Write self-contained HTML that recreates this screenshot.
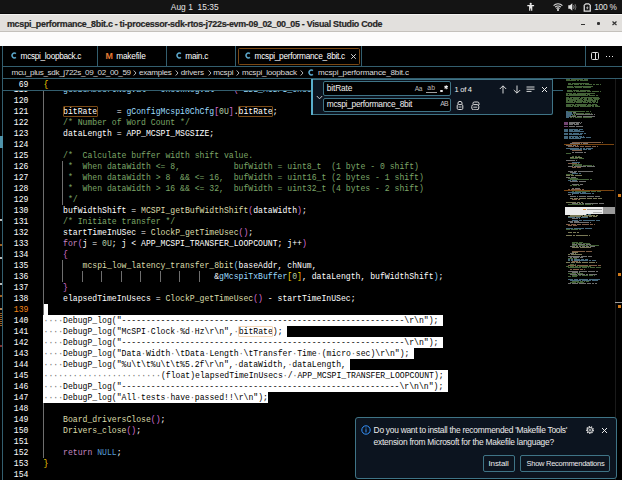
<!DOCTYPE html><html><head><meta charset="utf-8"><style>
*{margin:0;padding:0;box-sizing:border-box}
html,body{width:622px;height:480px;overflow:hidden;background:#000}
body{position:relative;font-family:"Liberation Sans",sans-serif}
.a{position:absolute}
.t{position:absolute;white-space:pre;line-height:1}
.s{-webkit-text-stroke:0.2px currentColor}
.code{position:absolute;left:0;width:622px;height:11px;font-family:"Liberation Mono",monospace;font-size:8.130px;line-height:11px;white-space:pre}
.ln{position:absolute;top:0;width:30px;text-align:right;color:#fff}
.ct{position:absolute;left:43.50px;top:0}
.hl{position:absolute;top:0;height:11px;border:1px solid #7a4a16;border-radius:1px}
.sel{position:absolute;background:#fff}
.bd{background:#335e6e}
</style></head><body>
<div class="a" style="left:0;top:0;width:622px;height:14px;background:#141414"></div>
<div class="t" style="left:170.80px;top:3.20px;font-size:8.40px;font-weight:normal;color:#e6e6e6;letter-spacing:0.025px">Aug 1  15:35</div>
<svg class="a" style="left:526px;top:2px" width="10" height="10" viewBox="0 0 10 10"><circle cx="4.7" cy="1.9" r="1.1" fill="#e8e8e8"/><path d="M1.3 3.6 H8.1 M4.7 3.6 V6.5 M3.7 4 V8.8 M5.7 4 V8.8" stroke="#e8e8e8" stroke-width="1.2" fill="none"/></svg>
<svg class="a" style="left:552.5px;top:2.8px" width="10" height="8" viewBox="0 0 10 8"><path d="M0.6 2.6 A6.2 6.2 0 0 1 9.4 2.6" stroke="#e0e0e0" stroke-width="1.1" fill="none"/><path d="M2.1 4.2 A4 4 0 0 1 7.9 4.2" stroke="#e0e0e0" stroke-width="1.1" fill="none"/><path d="M3.5 5.6 A2 2 0 0 1 6.5 5.6" stroke="#e0e0e0" stroke-width="1.1" fill="none"/><circle cx="5" cy="6.9" r="1" fill="#eee"/></svg>
<svg class="a" style="left:567.5px;top:3px" width="10" height="8" viewBox="0 0 10 8"><path d="M0.3 2.3 H2 L4.3 0.3 V7.7 L2 5.7 H0.3Z" fill="#e8e8e8"/><path d="M5.6 2.2 Q6.6 4 5.6 5.8" stroke="#aaa" stroke-width="0.9" fill="none"/><path d="M7 1 Q8.9 4 7 7" stroke="#777" stroke-width="0.9" fill="none"/></svg>
<svg class="a" style="left:583px;top:2.5px" width="8.5" height="9" viewBox="0 0 8.5 9"><path d="M2.6 0.3 H5.9 L7.9 2 V8.7 H0.6 V2Z" fill="#e0e0e0"/><path d="M2.9 1.6 H5.6 L6.6 2.6 V7.4 H1.9 V2.6Z" fill="#141414"/><path d="M4.8 2.8 L3 5.3 H4.3 L3.7 7 L5.6 4.6 H4.3Z" fill="#e8e8e8"/></svg>
<div class="t" style="left:594.20px;top:3.10px;font-size:8.30px;font-weight:normal;color:#e6e6e6;letter-spacing:-0.186px">100 %</div>
<div class="a" style="left:0;top:14px;width:622px;height:1px;background:#f4f3f1"></div>
<div class="a" style="left:0;top:15px;width:622px;height:16px;background:#e2e0dd"></div>
<div class="a" style="left:0;top:30.5px;width:622px;height:1px;background:#c4c1bc"></div>
<div class="t s" style="left:7.00px;top:19.90px;font-size:8.90px;font-weight:bold;color:#262626;letter-spacing:-0.287px">mcspi_performance_8bit.c - ti-processor-sdk-rtos-j722s-evm-09_02_00_05 - Visual Studio Code</div>
<div class="a" style="left:581px;top:23.6px;width:4px;height:1.4px;background:#333"></div>
<div class="a" style="left:597px;top:21.5px;width:3px;height:3.2px;border-radius:1px;background:#333"></div>
<svg class="a" style="left:612px;top:21px" width="5" height="4.5" viewBox="0 0 5 4.5"><path d="M0.5 0.5 L4.5 4 M4.5 0.5 L0.5 4" stroke="#333" stroke-width="1.2"/></svg>
<div class="a" style="left:0;top:31.5px;width:622px;height:14.5px;background:#fcfcfc"></div>
<div class="a" style="left:0;top:13px;width:622px;height:1px;background:#080808"></div>
<div class="a" style="left:0;top:46px;width:622px;height:434px;background:#000"></div>
<div class="a bd" style="left:2px;top:46px;width:1px;height:434px"></div>
<div class="a bd" style="left:2px;top:66px;width:620px;height:1px"></div>
<div class="a bd" style="left:2px;top:78px;width:620px;height:1px"></div>
<div class="a bd" style="left:97px;top:46px;width:1px;height:20px"></div>
<div class="a bd" style="left:166px;top:46px;width:1px;height:20px"></div>
<div class="a bd" style="left:235px;top:46px;width:1px;height:20px"></div>
<div class="a bd" style="left:585px;top:46px;width:1px;height:20px"></div>
<div class="a bd" style="left:361px;top:46px;width:1px;height:20px"></div>
<div class="a" style="left:238px;top:48px;width:122px;height:17px;border:1px solid #7a4814;border-radius:1.5px"></div>
<svg class="a" style="left:9.90px;top:51.35px" width="8" height="9" viewBox="0 0 8 9"><path d="M5.9 2.6 A2.3 2.5 0 1 0 5.9 6.4" stroke="#5aa5c8" stroke-width="1.5" fill="none"/></svg>
<div class="t" style="left:20.60px;top:52.30px;font-size:8.30px;font-weight:normal;color:#ffffff;letter-spacing:-0.335px">mcspi_loopback.c</div>
<div class="t" style="left:105.6px;top:51.6px;font-size:8.9px;font-weight:bold;color:#e37933">M</div>
<div class="t" style="left:116.20px;top:52.30px;font-size:8.30px;font-weight:normal;color:#ffffff;letter-spacing:-0.188px">makefile</div>
<svg class="a" style="left:174.90px;top:51.35px" width="8" height="9" viewBox="0 0 8 9"><path d="M5.9 2.6 A2.3 2.5 0 1 0 5.9 6.4" stroke="#5aa5c8" stroke-width="1.5" fill="none"/></svg>
<div class="t" style="left:185.30px;top:52.30px;font-size:8.30px;font-weight:normal;color:#ffffff;letter-spacing:-0.273px">main.c</div>
<svg class="a" style="left:244.10px;top:51.35px" width="8" height="9" viewBox="0 0 8 9"><path d="M5.9 2.6 A2.3 2.5 0 1 0 5.9 6.4" stroke="#5aa5c8" stroke-width="1.5" fill="none"/></svg>
<div class="t" style="left:254.60px;top:52.30px;font-size:8.30px;font-weight:normal;color:#ffffff;letter-spacing:-0.292px">mcspi_performance_8bit.c</div>
<svg class="a" style="left:350px;top:53px" width="7" height="7" viewBox="0 0 7 7"><path d="M1.2 1.2 L5.8 5.8 M5.8 1.2 L1.2 5.8" stroke="#e8e8e8" stroke-width="0.9"/></svg>
<div class="a" style="left:590.7px;top:52px;width:8.5px;height:8px;border:1px solid #ddd;border-radius:1.5px"></div>
<div class="a" style="left:594.5px;top:52.5px;width:1px;height:7px;background:#ddd"></div>
<div class="a" style="left:606px;top:55.6px;width:1.3px;height:1.3px;background:#eee"></div>
<div class="a" style="left:609px;top:55.6px;width:1.3px;height:1.3px;background:#eee"></div>
<div class="a" style="left:612px;top:55.6px;width:1.3px;height:1.3px;background:#eee"></div>
<div class="t" style="left:11.60px;top:69.00px;font-size:8.10px;font-weight:normal;color:#dcdcdc;letter-spacing:-0.350px">mcu_plus_sdk_j722s_09_02_00_59</div>
<svg class="a" style="left:133.4px;top:70px" width="4" height="7" viewBox="0 0 4 7"><path d="M0.7 0.5 L3 3 L0.7 5.5" stroke="#e0e0e0" stroke-width="0.8" fill="none"/></svg>
<div class="t" style="left:138.90px;top:69.00px;font-size:8.10px;font-weight:normal;color:#dcdcdc;letter-spacing:-0.255px">examples</div>
<svg class="a" style="left:174.6px;top:70px" width="4" height="7" viewBox="0 0 4 7"><path d="M0.7 0.5 L3 3 L0.7 5.5" stroke="#e0e0e0" stroke-width="0.8" fill="none"/></svg>
<div class="t" style="left:180.70px;top:69.00px;font-size:8.10px;font-weight:normal;color:#dcdcdc;letter-spacing:-0.157px">drivers</div>
<svg class="a" style="left:207.6px;top:70px" width="4" height="7" viewBox="0 0 4 7"><path d="M0.7 0.5 L3 3 L0.7 5.5" stroke="#e0e0e0" stroke-width="0.8" fill="none"/></svg>
<div class="t" style="left:213.30px;top:69.00px;font-size:8.10px;font-weight:normal;color:#dcdcdc;letter-spacing:-0.248px">mcspi</div>
<svg class="a" style="left:236.4px;top:70px" width="4" height="7" viewBox="0 0 4 7"><path d="M0.7 0.5 L3 3 L0.7 5.5" stroke="#e0e0e0" stroke-width="0.8" fill="none"/></svg>
<div class="t" style="left:242.00px;top:69.00px;font-size:8.10px;font-weight:normal;color:#dcdcdc;letter-spacing:-0.232px">mcspi_loopback</div>
<svg class="a" style="left:300.3px;top:70px" width="4" height="7" viewBox="0 0 4 7"><path d="M0.7 0.5 L3 3 L0.7 5.5" stroke="#e0e0e0" stroke-width="0.8" fill="none"/></svg>
<svg class="a" style="left:307.10px;top:68.05px" width="8" height="9" viewBox="0 0 8 9"><path d="M5.9 2.6 A2.3 2.5 0 1 0 5.9 6.4" stroke="#5aa5c8" stroke-width="1.5" fill="none"/></svg>
<div class="t" style="left:318.00px;top:69.00px;font-size:8.10px;font-weight:normal;color:#dcdcdc;letter-spacing:-0.172px">mcspi_performance_8bit.c</div>
<div class="a" style="left:0;top:79px;width:563px;height:401px;overflow:hidden">
<div class="a" style="left:43px;top:5px;width:1px;height:374px;background:#6e6e6e"></div>
<div class="code" style="top:5px">
<div class="ct"><span style="color:#9cdcfe">    gesbeAssertNegVal</span><span style="color:#ffffff"> = </span><span style="color:#9cdcfe">checkNegVal</span><span style="color:#ffffff">  = </span><span style="color:#da70d6">(</span><span style="color:#9cdcfe"> ESL_MCSPI_checkValueRange</span><span style="color:#87cefa">(</span><span style="color:#ffffff">x</span></div>
<div class="ln" style="left:0;width:28.4px;color:#ffffff">119</div>
</div>
<div class="code" style="top:16px">
<div class="ln" style="left:0;width:28.4px;color:#ffffff">120</div>
</div>
<div class="code" style="top:27px">
<div class="ct"><span style="color:#ffffff">    bitRate</span><span style="color:#ffffff">    = </span><span style="color:#9cdcfe">gConfigMcspi0ChCfg</span><span style="color:#da70d6">[</span><span style="color:#b5cea8">0U</span><span style="color:#da70d6">]</span><span style="color:#ffffff">.bitRate;</span></div>
<div class="ln" style="left:0;width:28.4px;color:#ffffff">121</div>
</div>
<div class="code" style="top:38px">
<div class="ct"><span style="color:#7ca668">    /* Number of Word Count */</span></div>
<div class="ln" style="left:0;width:28.4px;color:#ffffff">122</div>
</div>
<div class="code" style="top:49px">
<div class="ct"><span style="color:#ffffff">    dataLength = APP_MCSPI_MSGSIZE;</span></div>
<div class="ln" style="left:0;width:28.4px;color:#ffffff">123</div>
</div>
<div class="code" style="top:60px">
<div class="ln" style="left:0;width:28.4px;color:#ffffff">124</div>
</div>
<div class="code" style="top:71px">
<div class="ct"><span style="color:#7ca668">    /*  Calculate buffer width shift value.</span></div>
<div class="ln" style="left:0;width:28.4px;color:#ffffff">125</div>
</div>
<div class="code" style="top:82px">
<div class="ct"><span style="color:#7ca668">     *  When dataWidth &lt;= 8,           bufWidth = uint8_t  (1 byte - 0 shift)</span></div>
<div class="ln" style="left:0;width:28.4px;color:#ffffff">126</div>
</div>
<div class="code" style="top:93px">
<div class="ct"><span style="color:#7ca668">     *  When dataWidth &gt; 8  &amp;&amp; &lt;= 16,  bufWidth = uint16_t (2 bytes - 1 shift)</span></div>
<div class="ln" style="left:0;width:28.4px;color:#ffffff">127</div>
</div>
<div class="code" style="top:104px">
<div class="ct"><span style="color:#7ca668">     *  When dataWidth &gt; 16 &amp;&amp; &lt;= 32,  bufWidth = uint32_t (4 bytes - 2 shift)</span></div>
<div class="ln" style="left:0;width:28.4px;color:#ffffff">128</div>
</div>
<div class="code" style="top:115px">
<div class="ct"><span style="color:#7ca668">     */</span></div>
<div class="ln" style="left:0;width:28.4px;color:#ffffff">129</div>
</div>
<div class="code" style="top:126px">
<div class="ct"><span style="color:#ffffff">    bufWidthShift = </span><span style="color:#dcdcaa">MCSPI_getBufWidthShift</span><span style="color:#da70d6">(</span><span style="color:#ffffff">dataWidth</span><span style="color:#da70d6">)</span><span style="color:#ffffff">;</span></div>
<div class="ln" style="left:0;width:28.4px;color:#ffffff">130</div>
</div>
<div class="code" style="top:137px">
<div class="ct"><span style="color:#7ca668">    /* Initiate transfer */</span></div>
<div class="ln" style="left:0;width:28.4px;color:#ffffff">131</div>
</div>
<div class="code" style="top:148px">
<div class="ct"><span style="color:#ffffff">    startTimeInUSec = </span><span style="color:#dcdcaa">ClockP_getTimeUsec</span><span style="color:#da70d6">()</span><span style="color:#ffffff">;</span></div>
<div class="ln" style="left:0;width:28.4px;color:#ffffff">132</div>
</div>
<div class="code" style="top:159px">
<div class="ct"><span style="color:#ffffff">    </span><span style="color:#c586c0">for</span><span style="color:#da70d6">(</span><span style="color:#ffffff">j = </span><span style="color:#b5cea8">0U</span><span style="color:#ffffff">; j &lt; APP_MCSPI_TRANSFER_LOOPCOUNT; j++</span><span style="color:#da70d6">)</span></div>
<div class="ln" style="left:0;width:28.4px;color:#ffffff">133</div>
</div>
<div class="code" style="top:170px">
<div class="ct"><span style="color:#ffffff">    </span><span style="color:#da70d6">{</span></div>
<div class="ln" style="left:0;width:28.4px;color:#ffffff">134</div>
</div>
<div class="code" style="top:181px">
<div class="ct"><span style="color:#ffffff">        </span><span style="color:#dcdcaa">mcspi_low_latency_transfer_8bit</span><span style="color:#87cefa">(</span><span style="color:#ffffff">baseAddr, chNum,</span></div>
<div class="ln" style="left:0;width:28.4px;color:#ffffff">135</div>
</div>
<div class="code" style="top:192px">
<div class="ct"><span style="color:#ffffff">                                   &amp;</span><span style="color:#9cdcfe">gMcspiTxBuffer</span><span style="color:#ffd700">[</span><span style="color:#b5cea8">0</span><span style="color:#ffd700">]</span><span style="color:#ffffff">, dataLength, bufWidthShift</span><span style="color:#87cefa">)</span><span style="color:#ffffff">;</span></div>
<div class="ln" style="left:0;width:28.4px;color:#ffffff">136</div>
</div>
<div class="code" style="top:203px">
<div class="ct"><span style="color:#ffffff">    </span><span style="color:#da70d6">}</span></div>
<div class="ln" style="left:0;width:28.4px;color:#ffffff">137</div>
</div>
<div class="code" style="top:214px">
<div class="ct"><span style="color:#ffffff">    elapsedTimeInUsecs = </span><span style="color:#dcdcaa">ClockP_getTimeUsec</span><span style="color:#da70d6">()</span><span style="color:#ffffff"> - startTimeInUSec;</span></div>
<div class="ln" style="left:0;width:28.4px;color:#ffffff">138</div>
</div>
<div class="code" style="top:225px">
<div class="ln" style="left:0;width:28.4px;color:#f38518">139</div>
</div>
<div class="code" style="top:236px">
<div class="ln" style="left:0;width:28.4px;color:#ffffff">140</div>
</div>
<div class="code" style="top:247px">
<div class="ln" style="left:0;width:28.4px;color:#ffffff">141</div>
</div>
<div class="code" style="top:258px">
<div class="ln" style="left:0;width:28.4px;color:#ffffff">142</div>
</div>
<div class="code" style="top:269px">
<div class="ln" style="left:0;width:28.4px;color:#ffffff">143</div>
</div>
<div class="code" style="top:280px">
<div class="ln" style="left:0;width:28.4px;color:#ffffff">144</div>
</div>
<div class="code" style="top:291px">
<div class="ln" style="left:0;width:28.4px;color:#ffffff">145</div>
</div>
<div class="code" style="top:302px">
<div class="ln" style="left:0;width:28.4px;color:#ffffff">146</div>
</div>
<div class="code" style="top:313px">
<div class="ln" style="left:0;width:28.4px;color:#ffffff">147</div>
</div>
<div class="code" style="top:324px">
<div class="ln" style="left:0;width:28.4px;color:#ffffff">148</div>
</div>
<div class="code" style="top:335px">
<div class="ct"><span style="color:#ffffff">    </span><span style="color:#dcdcaa">Board_driversClose</span><span style="color:#da70d6">()</span><span style="color:#ffffff">;</span></div>
<div class="ln" style="left:0;width:28.4px;color:#ffffff">149</div>
</div>
<div class="code" style="top:346px">
<div class="ct"><span style="color:#ffffff">    </span><span style="color:#dcdcaa">Drivers_close</span><span style="color:#da70d6">()</span><span style="color:#ffffff">;</span></div>
<div class="ln" style="left:0;width:28.4px;color:#ffffff">150</div>
</div>
<div class="code" style="top:357px">
<div class="ln" style="left:0;width:28.4px;color:#ffffff">151</div>
</div>
<div class="code" style="top:368px">
<div class="ct"><span style="color:#ffffff">    </span><span style="color:#c586c0">return</span><span style="color:#ffffff"> </span><span style="color:#569cd6">NULL</span><span style="color:#ffffff">;</span></div>
<div class="ln" style="left:0;width:28.4px;color:#ffffff">152</div>
</div>
<div class="code" style="top:379px">
<div class="ct"><span style="color:#ffd700">}</span></div>
<div class="ln" style="left:0;width:28.4px;color:#ffffff">153</div>
</div>
<div class="code" style="top:390px">
<div class="ln" style="left:0;width:28.4px;color:#ffffff">154</div>
</div>
<div class="a" style="left:62.0px;top:82px;width:1px;height:44px;background:#6e6e6e"></div>
<div class="a" style="left:62.0px;top:181px;width:1px;height:22px;background:#6e6e6e"></div>
<div class="a" style="left:82.0px;top:192px;width:1px;height:11px;background:#6e6e6e"></div>
<div class="a" style="left:101.0px;top:192px;width:1px;height:11px;background:#6e6e6e"></div>
<div class="a" style="left:121.0px;top:192px;width:1px;height:11px;background:#6e6e6e"></div>
<div class="a" style="left:140.0px;top:192px;width:1px;height:11px;background:#6e6e6e"></div>
<div class="a" style="left:160.0px;top:192px;width:1px;height:11px;background:#6e6e6e"></div>
<div class="a" style="left:179.0px;top:192px;width:1px;height:11px;background:#6e6e6e"></div>
<div class="a" style="left:199.0px;top:192px;width:1px;height:11px;background:#6e6e6e"></div>
<div class="sel" style="left:44.10px;top:225px;width:3.70px;height:11px"></div>
<div class="sel" style="left:43.30px;top:236px;width:399.56px;height:11px"></div>
<div class="sel" style="left:43.30px;top:247px;width:243.52px;height:11px"></div>
<div class="sel" style="left:43.30px;top:258px;width:399.56px;height:11px"></div>
<div class="sel" style="left:43.30px;top:269px;width:370.30px;height:11px"></div>
<div class="sel" style="left:43.30px;top:280px;width:306.91px;height:11px"></div>
<div class="sel" style="left:43.30px;top:291px;width:404.43px;height:11px"></div>
<div class="sel" style="left:43.30px;top:302px;width:404.43px;height:11px"></div>
<div class="sel" style="left:43.30px;top:313px;width:224.50px;height:11px"></div>
<div class="code" style="top:236px;color:#000"><div class="ct"><span style="color:#707070">&#183;</span><span style="color:#707070">&#183;</span><span style="color:#707070">&#183;</span><span style="color:#707070">&#183;</span>DebugP_log(&quot;----------------------------------------------------------\r\n&quot;);</div></div>
<div class="code" style="top:247px;color:#000"><div class="ct"><span style="color:#707070">&#183;</span><span style="color:#707070">&#183;</span><span style="color:#707070">&#183;</span><span style="color:#707070">&#183;</span>DebugP_log(&quot;McSPI<span style="color:#707070">&#183;</span>Clock<span style="color:#707070">&#183;</span>%d<span style="color:#707070">&#183;</span>Hz\r\n&quot;,<span style="color:#707070">&#183;</span>bitRate);</div></div>
<div class="code" style="top:258px;color:#000"><div class="ct"><span style="color:#707070">&#183;</span><span style="color:#707070">&#183;</span><span style="color:#707070">&#183;</span><span style="color:#707070">&#183;</span>DebugP_log(&quot;----------------------------------------------------------\r\n&quot;);</div></div>
<div class="code" style="top:269px;color:#000"><div class="ct"><span style="color:#707070">&#183;</span><span style="color:#707070">&#183;</span><span style="color:#707070">&#183;</span><span style="color:#707070">&#183;</span>DebugP_log(&quot;Data<span style="color:#707070">&#183;</span>Width<span style="color:#707070">&#183;</span>\tData<span style="color:#707070">&#183;</span>Length<span style="color:#707070">&#183;</span>\tTransfer<span style="color:#707070">&#183;</span>Time<span style="color:#707070">&#183;</span>(micro<span style="color:#707070">&#183;</span>sec)\r\n&quot;);</div></div>
<div class="code" style="top:280px;color:#000"><div class="ct"><span style="color:#707070">&#183;</span><span style="color:#707070">&#183;</span><span style="color:#707070">&#183;</span><span style="color:#707070">&#183;</span>DebugP_log(&quot;%u\t\t%u\t\t%5.2f\r\n&quot;,<span style="color:#707070">&#183;</span>dataWidth,<span style="color:#707070">&#183;</span>dataLength,</div></div>
<div class="code" style="top:291px;color:#000"><div class="ct"><span style="color:#707070">&#183;</span><span style="color:#707070">&#183;</span><span style="color:#707070">&#183;</span><span style="color:#707070">&#183;</span><span style="color:#707070">&#183;</span><span style="color:#707070">&#183;</span><span style="color:#707070">&#183;</span><span style="color:#707070">&#183;</span><span style="color:#707070">&#183;</span><span style="color:#707070">&#183;</span><span style="color:#707070">&#183;</span><span style="color:#707070">&#183;</span><span style="color:#707070">&#183;</span><span style="color:#707070">&#183;</span><span style="color:#707070">&#183;</span><span style="color:#707070">&#183;</span><span style="color:#707070">&#183;</span><span style="color:#707070">&#183;</span><span style="color:#707070">&#183;</span><span style="color:#707070">&#183;</span><span style="color:#707070">&#183;</span><span style="color:#707070">&#183;</span><span style="color:#707070">&#183;</span><span style="color:#707070">&#183;</span>(float)elapsedTimeInUsecs<span style="color:#707070">&#183;</span>/<span style="color:#707070">&#183;</span>APP_MCSPI_TRANSFER_LOOPCOUNT);</div></div>
<div class="code" style="top:302px;color:#000"><div class="ct"><span style="color:#707070">&#183;</span><span style="color:#707070">&#183;</span><span style="color:#707070">&#183;</span><span style="color:#707070">&#183;</span>DebugP_log(&quot;---------------------------------------------------------\r\n\n&quot;);</div></div>
<div class="code" style="top:313px;color:#000"><div class="ct"><span style="color:#707070">&#183;</span><span style="color:#707070">&#183;</span><span style="color:#707070">&#183;</span><span style="color:#707070">&#183;</span>DebugP_log(&quot;All<span style="color:#707070">&#183;</span>tests<span style="color:#707070">&#183;</span>have<span style="color:#707070">&#183;</span>passed!!\r\n&quot;);</div></div>
<div class="hl" style="left:62.50px;top:27px;width:35.13px"></div>
<div class="hl" style="left:238.04px;top:27px;width:35.13px"></div>
<div class="hl" style="left:238.04px;top:247px;width:35.13px;border-color:#f3d6b8"></div>
<div class="a" style="left:3px;top:0;width:560px;height:11px;background:#000"></div>
<div class="code" style="top:0"><div class="ct"><span style="color:#ffd700">{</span></div><div class="ln" style="left:0;width:28.4px">69</div></div>
<div class="a bd" style="left:2px;top:11px;width:561px;height:1px"></div>
</div>
<div class="a" style="left:311px;top:79px;width:242px;height:36px;background:#0c141f;border:1px solid #3f7486;border-left:none;border-radius:0 0 2px 2px"></div>
<div class="a" style="left:311px;top:79px;width:2px;height:36px;background:#5aaecb"></div>
<svg class="a" style="left:316px;top:95px" width="7" height="5" viewBox="0 0 7 5"><path d="M0.8 1 L3.5 3.8 L6.2 1" stroke="#ddd" stroke-width="0.9" fill="none"/></svg>
<div class="a" style="left:322.5px;top:81px;width:128.5px;height:14.5px;background:#000;border:1px solid #3f7486;border-radius:2px"></div>
<div class="a" style="left:322.5px;top:97.8px;width:128.5px;height:14.5px;background:#000;border:1px solid #3f7486;border-radius:2px"></div>
<div class="t" style="left:326.80px;top:84.30px;font-size:8.40px;font-weight:normal;color:#f0f0f0;letter-spacing:-0.150px">bitRate</div>
<div class="t" style="left:326.80px;top:100.30px;font-size:8.40px;font-weight:normal;color:#f0f0f0;letter-spacing:-0.296px">mcspi_performance_8bit</div>
<div class="t" style="left:414.80px;top:85.60px;font-size:6.60px;font-weight:normal;color:#b8b8b8;letter-spacing:-0.339px">Aa</div>
<div class="t" style="left:427.20px;top:85.40px;font-size:6.80px;font-weight:normal;color:#b8b8b8;letter-spacing:0.319px">ab</div>
<div class="a" style="left:426px;top:91.5px;width:10.5px;height:1px;background:#a0a0a0"></div>
<div class="a" style="left:440.3px;top:89.7px;width:2.7px;height:2.7px;background:#e8e8e8;border-radius:50%"></div>
<svg class="a" style="left:443.6px;top:85px" width="4.5" height="4.5" viewBox="0 0 4 4"><path d="M2 0.2 V3.8 M0.4 1.1 L3.6 2.9 M3.6 1.1 L0.4 2.9" stroke="#eee" stroke-width="0.9"/></svg>
<div class="t" style="left:440.20px;top:101.00px;font-size:6.90px;font-weight:normal;color:#c0c0c0;letter-spacing:-0.702px">AB</div>
<div class="t" style="left:454.50px;top:86.00px;font-size:7.50px;font-weight:normal;color:#f0f0f0;letter-spacing:-0.244px">1 of 4</div>
<svg class="a" style="left:498.5px;top:85px" width="8" height="9" viewBox="0 0 8 9"><path d="M4 8.5 V1 M0.8 4 L4 0.8 L7.2 4" stroke="#eee" stroke-width="0.9" fill="none"/></svg>
<svg class="a" style="left:512.5px;top:85px" width="8" height="9" viewBox="0 0 8 9"><path d="M4 0.5 V8 M0.8 5 L4 8.2 L7.2 5" stroke="#eee" stroke-width="0.9" fill="none"/></svg>
<svg class="a" style="left:525.5px;top:86px" width="9" height="7" viewBox="0 0 9 7"><path d="M0.5 1 H8.5 M0.5 3.2 H8.5 M0.5 5.4 H5.5" stroke="#eee" stroke-width="0.9" fill="none"/></svg>
<svg class="a" style="left:541px;top:86px" width="7" height="7" viewBox="0 0 7 7"><path d="M1 1 L6 6 M6 1 L1 6" stroke="#eee" stroke-width="1" fill="none"/></svg>
<svg class="a" style="left:456px;top:101px" width="8" height="9" viewBox="0 0 8 9"><path d="M2 3.2 V2 A2 1.6 0 0 1 6 2 V3.2" stroke="#ddd" stroke-width="1" fill="none"/><rect x="1.2" y="3.6" width="5.6" height="4.9" rx="1.2" fill="none" stroke="#ddd" stroke-width="1"/><path d="M2.5 6 H5.5" stroke="#ddd" stroke-width="0.9"/></svg>
<svg class="a" style="left:470.5px;top:100.5px" width="9" height="9.5" viewBox="0 0 9 9.5"><path d="M2 3 V2.2 Q2 1 3.5 1 H6.5 Q8 1 8 2.5 V4" stroke="#ddd" stroke-width="1" fill="none"/><rect x="0.8" y="3.6" width="7" height="5.2" rx="1.8" fill="none" stroke="#ddd" stroke-width="1"/><path d="M2.3 6.2 H6.3" stroke="#ddd" stroke-width="0.9"/></svg>
<div class="a bd" style="left:553px;top:90px;width:10px;height:1px"></div>
<div style="opacity:0.72"><div class="a" style="left:563px;top:79px;width:52px;height:206px;overflow:hidden"><div class="a" style="left:3.00px;top:0.20px;width:4.21px;height:0.75px;background:#5f8a4e"></div><div class="a" style="left:7.81px;top:0.20px;width:4.86px;height:0.75px;background:#5f8a4e"></div><div class="a" style="left:13.27px;top:0.20px;width:7.05px;height:0.75px;background:#5f8a4e"></div><div class="a" style="left:20.92px;top:0.20px;width:4.08px;height:0.75px;background:#5f8a4e"></div><div class="a" style="left:3.00px;top:1.36px;width:4.55px;height:0.75px;background:#5f8a4e"></div><div class="a" style="left:8.15px;top:1.36px;width:5.02px;height:0.75px;background:#5f8a4e"></div><div class="a" style="left:13.77px;top:1.36px;width:2.61px;height:0.75px;background:#5f8a4e"></div><div class="a" style="left:16.98px;top:1.36px;width:4.57px;height:0.75px;background:#5f8a4e"></div><div class="a" style="left:22.15px;top:1.36px;width:2.85px;height:0.75px;background:#5f8a4e"></div><div class="a" style="left:4.59px;top:3.68px;width:3.32px;height:0.75px;background:#5f8a4e"></div><div class="a" style="left:8.51px;top:3.68px;width:2.04px;height:0.75px;background:#5f8a4e"></div><div class="a" style="left:11.15px;top:3.68px;width:6.36px;height:0.75px;background:#5f8a4e"></div><div class="a" style="left:18.11px;top:3.68px;width:5.66px;height:0.75px;background:#5f8a4e"></div><div class="a" style="left:24.37px;top:3.68px;width:1.53px;height:0.75px;background:#5f8a4e"></div><div class="a" style="left:4.96px;top:4.84px;width:5.42px;height:0.75px;background:#5f8a4e"></div><div class="a" style="left:10.99px;top:4.84px;width:5.19px;height:0.75px;background:#5f8a4e"></div><div class="a" style="left:16.78px;top:4.84px;width:2.44px;height:0.75px;background:#5f8a4e"></div><div class="a" style="left:19.83px;top:4.84px;width:1.59px;height:0.75px;background:#5f8a4e"></div><div class="a" style="left:22.02px;top:4.84px;width:4.67px;height:0.75px;background:#5f8a4e"></div><div class="a" style="left:27.29px;top:4.84px;width:1.86px;height:0.75px;background:#5f8a4e"></div><div class="a" style="left:29.74px;top:4.84px;width:2.64px;height:0.75px;background:#5f8a4e"></div><div class="a" style="left:32.99px;top:4.84px;width:2.95px;height:0.75px;background:#5f8a4e"></div><div class="a" style="left:36.54px;top:4.84px;width:1.68px;height:0.75px;background:#5f8a4e"></div><div class="a" style="left:3.93px;top:7.16px;width:6.55px;height:0.75px;background:#5f8a4e"></div><div class="a" style="left:11.08px;top:7.16px;width:4.61px;height:0.75px;background:#5f8a4e"></div><div class="a" style="left:16.30px;top:7.16px;width:5.34px;height:0.75px;background:#5f8a4e"></div><div class="a" style="left:22.24px;top:7.16px;width:4.50px;height:0.75px;background:#5f8a4e"></div><div class="a" style="left:27.34px;top:7.16px;width:2.76px;height:0.75px;background:#5f8a4e"></div><div class="a" style="left:3.91px;top:8.32px;width:7.49px;height:0.75px;background:#5f8a4e"></div><div class="a" style="left:12.00px;top:8.32px;width:7.47px;height:0.75px;background:#5f8a4e"></div><div class="a" style="left:20.07px;top:8.32px;width:6.54px;height:0.75px;background:#5f8a4e"></div><div class="a" style="left:27.22px;top:8.32px;width:0.59px;height:0.75px;background:#5f8a4e"></div><div class="a" style="left:3.63px;top:10.64px;width:3.23px;height:0.75px;background:#5f8a4e"></div><div class="a" style="left:7.46px;top:10.64px;width:1.92px;height:0.75px;background:#5f8a4e"></div><div class="a" style="left:9.99px;top:10.64px;width:6.10px;height:0.75px;background:#5f8a4e"></div><div class="a" style="left:16.68px;top:10.64px;width:3.90px;height:0.75px;background:#5f8a4e"></div><div class="a" style="left:21.19px;top:10.64px;width:5.66px;height:0.75px;background:#5f8a4e"></div><div class="a" style="left:3.77px;top:11.80px;width:6.58px;height:0.75px;background:#5f8a4e"></div><div class="a" style="left:10.96px;top:11.80px;width:1.50px;height:0.75px;background:#5f8a4e"></div><div class="a" style="left:13.06px;top:11.80px;width:2.76px;height:0.75px;background:#5f8a4e"></div><div class="a" style="left:16.42px;top:11.80px;width:6.96px;height:0.75px;background:#5f8a4e"></div><div class="a" style="left:23.98px;top:11.80px;width:4.32px;height:0.75px;background:#5f8a4e"></div><div class="a" style="left:28.90px;top:11.80px;width:7.38px;height:0.75px;background:#5f8a4e"></div><div class="a" style="left:36.88px;top:11.80px;width:0.30px;height:0.75px;background:#5f8a4e"></div><div class="a" style="left:3.15px;top:14.12px;width:6.17px;height:0.75px;background:#5f8a4e"></div><div class="a" style="left:9.92px;top:14.12px;width:3.12px;height:0.75px;background:#5f8a4e"></div><div class="a" style="left:13.64px;top:14.12px;width:2.02px;height:0.75px;background:#5f8a4e"></div><div class="a" style="left:16.26px;top:14.12px;width:3.50px;height:0.75px;background:#5f8a4e"></div><div class="a" style="left:20.35px;top:14.12px;width:7.28px;height:0.75px;background:#5f8a4e"></div><div class="a" style="left:28.24px;top:14.12px;width:3.72px;height:0.75px;background:#5f8a4e"></div><div class="a" style="left:3.24px;top:15.28px;width:2.11px;height:0.75px;background:#5f8a4e"></div><div class="a" style="left:5.94px;top:15.28px;width:1.86px;height:0.75px;background:#5f8a4e"></div><div class="a" style="left:8.40px;top:15.28px;width:6.28px;height:0.75px;background:#5f8a4e"></div><div class="a" style="left:15.28px;top:15.28px;width:2.57px;height:0.75px;background:#5f8a4e"></div><div class="a" style="left:18.45px;top:15.28px;width:4.86px;height:0.75px;background:#5f8a4e"></div><div class="a" style="left:23.91px;top:15.28px;width:2.78px;height:0.75px;background:#5f8a4e"></div><div class="a" style="left:3.00px;top:16.44px;width:5.89px;height:0.75px;background:#5f8a4e"></div><div class="a" style="left:9.49px;top:16.44px;width:2.29px;height:0.75px;background:#5f8a4e"></div><div class="a" style="left:12.38px;top:16.44px;width:5.36px;height:0.75px;background:#5f8a4e"></div><div class="a" style="left:18.34px;top:16.44px;width:2.20px;height:0.75px;background:#5f8a4e"></div><div class="a" style="left:21.14px;top:16.44px;width:4.02px;height:0.75px;background:#5f8a4e"></div><div class="a" style="left:25.76px;top:16.44px;width:2.78px;height:0.75px;background:#5f8a4e"></div><div class="a" style="left:29.14px;top:16.44px;width:3.12px;height:0.75px;background:#5f8a4e"></div><div class="a" style="left:32.86px;top:16.44px;width:1.71px;height:0.75px;background:#5f8a4e"></div><div class="a" style="left:3.00px;top:17.60px;width:3.32px;height:0.75px;background:#5f8a4e"></div><div class="a" style="left:6.92px;top:17.60px;width:6.81px;height:0.75px;background:#5f8a4e"></div><div class="a" style="left:14.33px;top:17.60px;width:2.76px;height:0.75px;background:#5f8a4e"></div><div class="a" style="left:17.70px;top:17.60px;width:3.87px;height:0.75px;background:#5f8a4e"></div><div class="a" style="left:22.16px;top:17.60px;width:6.63px;height:0.75px;background:#5f8a4e"></div><div class="a" style="left:29.39px;top:17.60px;width:5.35px;height:0.75px;background:#5f8a4e"></div><div class="a" style="left:35.34px;top:17.60px;width:1.07px;height:0.75px;background:#5f8a4e"></div><div class="a" style="left:3.00px;top:18.76px;width:2.78px;height:0.75px;background:#5f8a4e"></div><div class="a" style="left:6.38px;top:18.76px;width:3.05px;height:0.75px;background:#5f8a4e"></div><div class="a" style="left:10.03px;top:18.76px;width:6.14px;height:0.75px;background:#5f8a4e"></div><div class="a" style="left:16.77px;top:18.76px;width:3.47px;height:0.75px;background:#5f8a4e"></div><div class="a" style="left:20.84px;top:18.76px;width:3.28px;height:0.75px;background:#5f8a4e"></div><div class="a" style="left:24.72px;top:18.76px;width:1.94px;height:0.75px;background:#5f8a4e"></div><div class="a" style="left:27.26px;top:18.76px;width:2.04px;height:0.75px;background:#5f8a4e"></div><div class="a" style="left:29.90px;top:18.76px;width:5.00px;height:0.75px;background:#5f8a4e"></div><div class="a" style="left:35.49px;top:18.76px;width:1.47px;height:0.75px;background:#5f8a4e"></div><div class="a" style="left:3.00px;top:19.92px;width:3.73px;height:0.75px;background:#5f8a4e"></div><div class="a" style="left:7.33px;top:19.92px;width:4.22px;height:0.75px;background:#5f8a4e"></div><div class="a" style="left:12.15px;top:19.92px;width:7.25px;height:0.75px;background:#5f8a4e"></div><div class="a" style="left:20.00px;top:19.92px;width:4.40px;height:0.75px;background:#5f8a4e"></div><div class="a" style="left:25.01px;top:19.92px;width:4.95px;height:0.75px;background:#5f8a4e"></div><div class="a" style="left:30.55px;top:19.92px;width:5.25px;height:0.75px;background:#5f8a4e"></div><div class="a" style="left:3.00px;top:21.08px;width:2.42px;height:0.75px;background:#5f8a4e"></div><div class="a" style="left:6.02px;top:21.08px;width:6.95px;height:0.75px;background:#5f8a4e"></div><div class="a" style="left:13.58px;top:21.08px;width:6.41px;height:0.75px;background:#5f8a4e"></div><div class="a" style="left:20.58px;top:21.08px;width:3.00px;height:0.75px;background:#5f8a4e"></div><div class="a" style="left:24.18px;top:21.08px;width:2.64px;height:0.75px;background:#5f8a4e"></div><div class="a" style="left:27.42px;top:21.08px;width:5.94px;height:0.75px;background:#5f8a4e"></div><div class="a" style="left:33.95px;top:21.08px;width:0.59px;height:0.75px;background:#5f8a4e"></div><div class="a" style="left:3.00px;top:22.24px;width:7.20px;height:0.75px;background:#5f8a4e"></div><div class="a" style="left:10.80px;top:22.24px;width:6.79px;height:0.75px;background:#5f8a4e"></div><div class="a" style="left:18.19px;top:22.24px;width:5.12px;height:0.75px;background:#5f8a4e"></div><div class="a" style="left:23.92px;top:22.24px;width:4.03px;height:0.75px;background:#5f8a4e"></div><div class="a" style="left:28.54px;top:22.24px;width:2.12px;height:0.75px;background:#5f8a4e"></div><div class="a" style="left:31.27px;top:22.24px;width:1.73px;height:0.75px;background:#5f8a4e"></div><div class="a" style="left:33.60px;top:22.24px;width:0.99px;height:0.75px;background:#5f8a4e"></div><div class="a" style="left:3.00px;top:23.40px;width:5.73px;height:0.75px;background:#5f8a4e"></div><div class="a" style="left:9.33px;top:23.40px;width:3.04px;height:0.75px;background:#5f8a4e"></div><div class="a" style="left:12.97px;top:23.40px;width:6.44px;height:0.75px;background:#5f8a4e"></div><div class="a" style="left:20.01px;top:23.40px;width:5.08px;height:0.75px;background:#5f8a4e"></div><div class="a" style="left:25.69px;top:23.40px;width:3.26px;height:0.75px;background:#5f8a4e"></div><div class="a" style="left:29.55px;top:23.40px;width:2.55px;height:0.75px;background:#5f8a4e"></div><div class="a" style="left:32.70px;top:23.40px;width:2.01px;height:0.75px;background:#5f8a4e"></div><div class="a" style="left:3.00px;top:24.56px;width:2.87px;height:0.75px;background:#5f8a4e"></div><div class="a" style="left:6.47px;top:24.56px;width:4.86px;height:0.75px;background:#5f8a4e"></div><div class="a" style="left:11.93px;top:24.56px;width:6.61px;height:0.75px;background:#5f8a4e"></div><div class="a" style="left:19.14px;top:24.56px;width:5.19px;height:0.75px;background:#5f8a4e"></div><div class="a" style="left:24.93px;top:24.56px;width:3.18px;height:0.75px;background:#5f8a4e"></div><div class="a" style="left:28.71px;top:24.56px;width:5.50px;height:0.75px;background:#5f8a4e"></div><div class="a" style="left:3.00px;top:25.72px;width:1.60px;height:0.75px;background:#5f8a4e"></div><div class="a" style="left:5.20px;top:25.72px;width:3.12px;height:0.75px;background:#5f8a4e"></div><div class="a" style="left:8.91px;top:25.72px;width:4.17px;height:0.75px;background:#5f8a4e"></div><div class="a" style="left:13.69px;top:25.72px;width:1.86px;height:0.75px;background:#5f8a4e"></div><div class="a" style="left:16.15px;top:25.72px;width:2.56px;height:0.75px;background:#5f8a4e"></div><div class="a" style="left:19.31px;top:25.72px;width:3.71px;height:0.75px;background:#5f8a4e"></div><div class="a" style="left:23.62px;top:25.72px;width:4.93px;height:0.75px;background:#5f8a4e"></div><div class="a" style="left:29.15px;top:25.72px;width:2.29px;height:0.75px;background:#5f8a4e"></div><div class="a" style="left:32.04px;top:25.72px;width:2.57px;height:0.75px;background:#5f8a4e"></div><div class="a" style="left:3.00px;top:26.88px;width:7.38px;height:0.75px;background:#5f8a4e"></div><div class="a" style="left:10.98px;top:26.88px;width:5.44px;height:0.75px;background:#5f8a4e"></div><div class="a" style="left:17.02px;top:26.88px;width:5.65px;height:0.75px;background:#5f8a4e"></div><div class="a" style="left:23.27px;top:26.88px;width:5.01px;height:0.75px;background:#5f8a4e"></div><div class="a" style="left:28.88px;top:26.88px;width:2.34px;height:0.75px;background:#5f8a4e"></div><div class="a" style="left:31.82px;top:26.88px;width:1.71px;height:0.75px;background:#5f8a4e"></div><div class="a" style="left:34.13px;top:26.88px;width:1.61px;height:0.75px;background:#5f8a4e"></div><div class="a" style="left:36.34px;top:26.88px;width:0.33px;height:0.75px;background:#5f8a4e"></div><div class="a" style="left:3.00px;top:31.52px;width:1.63px;height:0.75px;background:#5f90ad"></div><div class="a" style="left:5.23px;top:31.52px;width:5.32px;height:0.75px;background:#5f8a4e"></div><div class="a" style="left:11.14px;top:31.52px;width:4.39px;height:0.75px;background:#5f8a4e"></div><div class="a" style="left:16.14px;top:31.52px;width:5.88px;height:0.75px;background:#5f8a4e"></div><div class="a" style="left:22.62px;top:31.52px;width:3.41px;height:0.75px;background:#5f8a4e"></div><div class="a" style="left:26.63px;top:31.52px;width:1.19px;height:0.75px;background:#5f8a4e"></div><div class="a" style="left:3.00px;top:32.68px;width:5.92px;height:0.75px;background:#5f90ad"></div><div class="a" style="left:9.52px;top:32.68px;width:3.28px;height:0.75px;background:#9a9a9a"></div><div class="a" style="left:3.00px;top:33.84px;width:6.26px;height:0.75px;background:#5f90ad"></div><div class="a" style="left:9.86px;top:33.84px;width:6.99px;height:0.75px;background:#5f8a4e"></div><div class="a" style="left:17.45px;top:33.84px;width:3.61px;height:0.75px;background:#5f8a4e"></div><div class="a" style="left:21.66px;top:33.84px;width:5.61px;height:0.75px;background:#5f8a4e"></div><div class="a" style="left:27.87px;top:33.84px;width:0.82px;height:0.75px;background:#5f8a4e"></div><div class="a" style="left:3.00px;top:35.00px;width:7.17px;height:0.75px;background:#5f90ad"></div><div class="a" style="left:10.77px;top:35.00px;width:1.68px;height:0.75px;background:#9a9a9a"></div><div class="a" style="left:13.05px;top:35.00px;width:4.50px;height:0.75px;background:#9a9a9a"></div><div class="a" style="left:18.15px;top:35.00px;width:1.59px;height:0.75px;background:#9a9a9a"></div><div class="a" style="left:20.33px;top:35.00px;width:5.47px;height:0.75px;background:#9a9a9a"></div><div class="a" style="left:26.41px;top:35.00px;width:3.78px;height:0.75px;background:#9a9a9a"></div><div class="a" style="left:30.78px;top:35.00px;width:1.12px;height:0.75px;background:#9a9a9a"></div><div class="a" style="left:3.00px;top:36.16px;width:5.34px;height:0.75px;background:#5f90ad"></div><div class="a" style="left:8.94px;top:36.16px;width:3.80px;height:0.75px;background:#5f8a4e"></div><div class="a" style="left:3.00px;top:37.32px;width:3.83px;height:0.75px;background:#5f90ad"></div><div class="a" style="left:7.43px;top:37.32px;width:5.91px;height:0.75px;background:#9a9a9a"></div><div class="a" style="left:13.94px;top:37.32px;width:4.99px;height:0.75px;background:#9a9a9a"></div><div class="a" style="left:19.53px;top:37.32px;width:4.14px;height:0.75px;background:#9a9a9a"></div><div class="a" style="left:24.27px;top:37.32px;width:6.53px;height:0.75px;background:#9a9a9a"></div><div class="a" style="left:31.40px;top:37.32px;width:0.72px;height:0.75px;background:#9a9a9a"></div><div class="a" style="left:3.00px;top:38.48px;width:3.36px;height:0.75px;background:#5f90ad"></div><div class="a" style="left:6.96px;top:38.48px;width:2.03px;height:0.75px;background:#5f8a4e"></div><div class="a" style="left:9.59px;top:38.48px;width:1.63px;height:0.75px;background:#5f8a4e"></div><div class="a" style="left:11.82px;top:38.48px;width:7.24px;height:0.75px;background:#5f8a4e"></div><div class="a" style="left:19.67px;top:38.48px;width:2.18px;height:0.75px;background:#5f8a4e"></div><div class="a" style="left:22.44px;top:38.48px;width:6.18px;height:0.75px;background:#5f8a4e"></div><div class="a" style="left:1.00px;top:43.12px;width:4.00px;height:0.75px;background:#a060a0"></div><div class="a" style="left:6.00px;top:43.12px;width:6.88px;height:0.75px;background:#9a9a9a"></div><div class="a" style="left:13.48px;top:43.12px;width:3.71px;height:0.75px;background:#9a9a9a"></div><div class="a" style="left:17.79px;top:43.12px;width:0.10px;height:0.75px;background:#9a9a9a"></div><div class="a" style="left:1.00px;top:44.28px;width:4.00px;height:0.75px;background:#a060a0"></div><div class="a" style="left:6.00px;top:44.28px;width:6.02px;height:0.75px;background:#9a9a9a"></div><div class="a" style="left:12.62px;top:44.28px;width:3.56px;height:0.75px;background:#9a9a9a"></div><div class="a" style="left:16.78px;top:44.28px;width:1.37px;height:0.75px;background:#9a9a9a"></div><div class="a" style="left:1.00px;top:45.44px;width:4.00px;height:0.75px;background:#a060a0"></div><div class="a" style="left:6.00px;top:45.44px;width:3.93px;height:0.75px;background:#9a9a9a"></div><div class="a" style="left:10.53px;top:45.44px;width:3.00px;height:0.75px;background:#9a9a9a"></div><div class="a" style="left:14.13px;top:45.44px;width:1.80px;height:0.75px;background:#9a9a9a"></div><div class="a" style="left:1.00px;top:46.60px;width:4.00px;height:0.75px;background:#a060a0"></div><div class="a" style="left:6.00px;top:46.60px;width:2.70px;height:0.75px;background:#9a9a9a"></div><div class="a" style="left:9.30px;top:46.60px;width:2.79px;height:0.75px;background:#9a9a9a"></div><div class="a" style="left:12.69px;top:46.60px;width:2.82px;height:0.75px;background:#9a9a9a"></div><div class="a" style="left:16.10px;top:46.60px;width:3.93px;height:0.75px;background:#9a9a9a"></div><div class="a" style="left:1.00px;top:50.08px;width:2.76px;height:0.75px;background:#5f90ad"></div><div class="a" style="left:4.36px;top:50.08px;width:0.64px;height:0.75px;background:#5f90ad"></div><div class="a" style="left:6.00px;top:50.08px;width:6.87px;height:0.75px;background:#5f90ad"></div><div class="a" style="left:13.47px;top:50.08px;width:1.74px;height:0.75px;background:#5f90ad"></div><div class="a" style="left:15.82px;top:50.08px;width:1.88px;height:0.75px;background:#5f90ad"></div><div class="a" style="left:18.30px;top:50.08px;width:1.91px;height:0.75px;background:#5f90ad"></div><div class="a" style="left:1.00px;top:51.24px;width:4.00px;height:0.75px;background:#5f90ad"></div><div class="a" style="left:6.00px;top:51.24px;width:4.33px;height:0.75px;background:#5f90ad"></div><div class="a" style="left:10.93px;top:51.24px;width:6.43px;height:0.75px;background:#5f90ad"></div><div class="a" style="left:1.00px;top:52.40px;width:4.00px;height:0.75px;background:#5f90ad"></div><div class="a" style="left:6.00px;top:52.40px;width:4.62px;height:0.75px;background:#5f90ad"></div><div class="a" style="left:11.22px;top:52.40px;width:5.53px;height:0.75px;background:#5f90ad"></div><div class="a" style="left:17.35px;top:52.40px;width:3.24px;height:0.75px;background:#5f90ad"></div><div class="a" style="left:1.00px;top:53.56px;width:4.00px;height:0.75px;background:#5f90ad"></div><div class="a" style="left:6.00px;top:53.56px;width:3.42px;height:0.75px;background:#5f90ad"></div><div class="a" style="left:10.02px;top:53.56px;width:6.47px;height:0.75px;background:#5f90ad"></div><div class="a" style="left:17.09px;top:53.56px;width:3.17px;height:0.75px;background:#5f90ad"></div><div class="a" style="left:20.86px;top:53.56px;width:2.63px;height:0.75px;background:#5f90ad"></div><div class="a" style="left:1.00px;top:54.72px;width:4.00px;height:0.75px;background:#5f90ad"></div><div class="a" style="left:6.00px;top:54.72px;width:3.63px;height:0.75px;background:#5f90ad"></div><div class="a" style="left:10.23px;top:54.72px;width:5.40px;height:0.75px;background:#5f90ad"></div><div class="a" style="left:16.22px;top:54.72px;width:3.15px;height:0.75px;background:#5f90ad"></div><div class="a" style="left:1.00px;top:57.04px;width:4.00px;height:0.75px;background:#5f90ad"></div><div class="a" style="left:6.00px;top:57.04px;width:2.64px;height:0.75px;background:#5f90ad"></div><div class="a" style="left:9.24px;top:57.04px;width:6.12px;height:0.75px;background:#5f90ad"></div><div class="a" style="left:15.95px;top:57.04px;width:3.10px;height:0.75px;background:#5f90ad"></div><div class="a" style="left:19.65px;top:57.04px;width:1.21px;height:0.75px;background:#5f90ad"></div><div class="a" style="left:1.00px;top:58.20px;width:4.00px;height:0.75px;background:#5f90ad"></div><div class="a" style="left:6.00px;top:58.20px;width:2.19px;height:0.75px;background:#5f90ad"></div><div class="a" style="left:8.79px;top:58.20px;width:2.15px;height:0.75px;background:#5f90ad"></div><div class="a" style="left:11.55px;top:58.20px;width:4.71px;height:0.75px;background:#5f90ad"></div><div class="a" style="left:16.86px;top:58.20px;width:5.34px;height:0.75px;background:#5f90ad"></div><div class="a" style="left:22.80px;top:58.20px;width:3.71px;height:0.75px;background:#5f90ad"></div><div class="a" style="left:27.11px;top:58.20px;width:0.70px;height:0.75px;background:#5f90ad"></div><div class="a" style="left:1.00px;top:59.36px;width:2.69px;height:0.75px;background:#5f90ad"></div><div class="a" style="left:4.29px;top:59.36px;width:0.71px;height:0.75px;background:#5f90ad"></div><div class="a" style="left:6.00px;top:59.36px;width:5.79px;height:0.75px;background:#5f90ad"></div><div class="a" style="left:12.39px;top:59.36px;width:6.03px;height:0.75px;background:#5f90ad"></div><div class="a" style="left:19.02px;top:59.36px;width:0.06px;height:0.75px;background:#5f90ad"></div><div class="a" style="left:9.00px;top:62.84px;width:4.50px;height:0.75px;background:#b08060"></div><div class="a" style="left:14.10px;top:62.84px;width:7.48px;height:0.75px;background:#b08060"></div><div class="a" style="left:22.18px;top:62.84px;width:2.46px;height:0.75px;background:#b08060"></div><div class="a" style="left:25.24px;top:62.84px;width:6.59px;height:0.75px;background:#b08060"></div><div class="a" style="left:32.43px;top:62.84px;width:5.70px;height:0.75px;background:#b08060"></div><div class="a" style="left:38.73px;top:62.84px;width:1.78px;height:0.75px;background:#b08060"></div><div class="a" style="left:7.00px;top:64.00px;width:2.68px;height:0.75px;background:#9a9a9a"></div><div class="a" style="left:10.28px;top:64.00px;width:6.82px;height:0.75px;background:#9a9a9a"></div><div class="a" style="left:17.71px;top:64.00px;width:1.54px;height:0.75px;background:#9a9a9a"></div><div class="a" style="left:19.85px;top:64.00px;width:4.77px;height:0.75px;background:#9a9a9a"></div><div class="a" style="left:9.00px;top:65.16px;width:5.41px;height:0.75px;background:#a8a878"></div><div class="a" style="left:15.01px;top:65.16px;width:2.73px;height:0.75px;background:#a8a878"></div><div class="a" style="left:18.34px;top:65.16px;width:5.83px;height:0.75px;background:#a8a878"></div><div class="a" style="left:24.77px;top:65.16px;width:2.21px;height:0.75px;background:#a8a878"></div><div class="a" style="left:3.00px;top:66.32px;width:3.84px;height:0.75px;background:#9a9a9a"></div><div class="a" style="left:7.44px;top:66.32px;width:2.03px;height:0.75px;background:#9a9a9a"></div><div class="a" style="left:10.07px;top:66.32px;width:3.36px;height:0.75px;background:#9a9a9a"></div><div class="a" style="left:14.03px;top:66.32px;width:0.76px;height:0.75px;background:#9a9a9a"></div><div class="a" style="left:5.00px;top:67.48px;width:3.59px;height:0.75px;background:#b08060"></div><div class="a" style="left:9.19px;top:67.48px;width:2.00px;height:0.75px;background:#b08060"></div><div class="a" style="left:11.79px;top:67.48px;width:4.15px;height:0.75px;background:#b08060"></div><div class="a" style="left:16.53px;top:67.48px;width:4.80px;height:0.75px;background:#b08060"></div><div class="a" style="left:21.93px;top:67.48px;width:6.11px;height:0.75px;background:#b08060"></div><div class="a" style="left:28.64px;top:67.48px;width:4.42px;height:0.75px;background:#b08060"></div><div class="a" style="left:33.67px;top:67.48px;width:0.29px;height:0.75px;background:#b08060"></div><div class="a" style="left:3.00px;top:68.64px;width:2.54px;height:0.75px;background:#5f90ad"></div><div class="a" style="left:6.14px;top:68.64px;width:3.51px;height:0.75px;background:#5f90ad"></div><div class="a" style="left:10.25px;top:68.64px;width:6.23px;height:0.75px;background:#5f90ad"></div><div class="a" style="left:17.07px;top:68.64px;width:2.34px;height:0.75px;background:#5f90ad"></div><div class="a" style="left:20.02px;top:68.64px;width:2.39px;height:0.75px;background:#5f90ad"></div><div class="a" style="left:23.01px;top:68.64px;width:4.60px;height:0.75px;background:#5f90ad"></div><div class="a" style="left:28.21px;top:68.64px;width:2.19px;height:0.75px;background:#5f90ad"></div><div class="a" style="left:7.00px;top:69.80px;width:5.63px;height:0.75px;background:#5f90ad"></div><div class="a" style="left:13.23px;top:69.80px;width:6.05px;height:0.75px;background:#5f90ad"></div><div class="a" style="left:19.88px;top:69.80px;width:4.14px;height:0.75px;background:#5f90ad"></div><div class="a" style="left:24.62px;top:69.80px;width:3.59px;height:0.75px;background:#5f90ad"></div><div class="a" style="left:9.00px;top:70.96px;width:4.59px;height:0.75px;background:#b08060"></div><div class="a" style="left:14.19px;top:70.96px;width:4.42px;height:0.75px;background:#b08060"></div><div class="a" style="left:9.00px;top:73.28px;width:2.35px;height:0.75px;background:#9a9a9a"></div><div class="a" style="left:11.95px;top:73.28px;width:4.77px;height:0.75px;background:#9a9a9a"></div><div class="a" style="left:17.32px;top:73.28px;width:3.14px;height:0.75px;background:#9a9a9a"></div><div class="a" style="left:21.05px;top:73.28px;width:1.47px;height:0.75px;background:#9a9a9a"></div><div class="a" style="left:3.00px;top:74.44px;width:3.76px;height:0.75px;background:#5f8a4e"></div><div class="a" style="left:7.36px;top:74.44px;width:0.78px;height:0.75px;background:#5f8a4e"></div><div class="a" style="left:9.00px;top:76.76px;width:2.06px;height:0.75px;background:#5f8a4e"></div><div class="a" style="left:11.66px;top:76.76px;width:2.50px;height:0.75px;background:#5f8a4e"></div><div class="a" style="left:14.76px;top:76.76px;width:2.65px;height:0.75px;background:#5f8a4e"></div><div class="a" style="left:7.00px;top:77.92px;width:4.46px;height:0.75px;background:#a8a878"></div><div class="a" style="left:12.06px;top:77.92px;width:3.54px;height:0.75px;background:#a8a878"></div><div class="a" style="left:16.20px;top:77.92px;width:2.70px;height:0.75px;background:#a8a878"></div><div class="a" style="left:7.00px;top:79.08px;width:2.65px;height:0.75px;background:#5f8a4e"></div><div class="a" style="left:10.25px;top:79.08px;width:5.21px;height:0.75px;background:#5f8a4e"></div><div class="a" style="left:16.06px;top:79.08px;width:4.83px;height:0.75px;background:#5f8a4e"></div><div class="a" style="left:3.00px;top:81.40px;width:2.86px;height:0.75px;background:#9a9a9a"></div><div class="a" style="left:6.46px;top:81.40px;width:5.62px;height:0.75px;background:#9a9a9a"></div><div class="a" style="left:12.69px;top:81.40px;width:0.75px;height:0.75px;background:#9a9a9a"></div><div class="a" style="left:9.00px;top:82.56px;width:5.89px;height:0.75px;background:#5f90ad"></div><div class="a" style="left:15.49px;top:82.56px;width:1.45px;height:0.75px;background:#5f90ad"></div><div class="a" style="left:5.00px;top:83.72px;width:4.68px;height:0.75px;background:#b08060"></div><div class="a" style="left:10.28px;top:83.72px;width:4.12px;height:0.75px;background:#b08060"></div><div class="a" style="left:15.00px;top:83.72px;width:0.53px;height:0.75px;background:#b08060"></div><div class="a" style="left:9.00px;top:84.88px;width:2.73px;height:0.75px;background:#5f8a4e"></div><div class="a" style="left:12.33px;top:84.88px;width:5.29px;height:0.75px;background:#5f8a4e"></div><div class="a" style="left:18.21px;top:84.88px;width:0.26px;height:0.75px;background:#5f8a4e"></div><div class="a" style="left:9.00px;top:86.04px;width:2.32px;height:0.75px;background:#5f8a4e"></div><div class="a" style="left:11.92px;top:86.04px;width:6.99px;height:0.75px;background:#5f8a4e"></div><div class="a" style="left:19.51px;top:86.04px;width:5.27px;height:0.75px;background:#5f8a4e"></div><div class="a" style="left:25.38px;top:86.04px;width:3.59px;height:0.75px;background:#5f8a4e"></div><div class="a" style="left:29.56px;top:86.04px;width:0.87px;height:0.75px;background:#5f8a4e"></div><div class="a" style="left:5.00px;top:87.20px;width:2.67px;height:0.75px;background:#9a9a9a"></div><div class="a" style="left:8.27px;top:87.20px;width:2.08px;height:0.75px;background:#9a9a9a"></div><div class="a" style="left:10.95px;top:87.20px;width:6.83px;height:0.75px;background:#9a9a9a"></div><div class="a" style="left:18.38px;top:87.20px;width:2.30px;height:0.75px;background:#9a9a9a"></div><div class="a" style="left:21.28px;top:87.20px;width:2.03px;height:0.75px;background:#9a9a9a"></div><div class="a" style="left:23.91px;top:87.20px;width:3.83px;height:0.75px;background:#9a9a9a"></div><div class="a" style="left:28.33px;top:87.20px;width:3.46px;height:0.75px;background:#9a9a9a"></div><div class="a" style="left:9.00px;top:88.36px;width:3.92px;height:0.75px;background:#b08060"></div><div class="a" style="left:13.52px;top:88.36px;width:4.01px;height:0.75px;background:#b08060"></div><div class="a" style="left:5.00px;top:91.84px;width:5.31px;height:0.75px;background:#9a9a9a"></div><div class="a" style="left:10.91px;top:91.84px;width:3.56px;height:0.75px;background:#9a9a9a"></div><div class="a" style="left:15.07px;top:91.84px;width:7.49px;height:0.75px;background:#9a9a9a"></div><div class="a" style="left:23.16px;top:91.84px;width:6.50px;height:0.75px;background:#9a9a9a"></div><div class="a" style="left:7.00px;top:93.00px;width:5.68px;height:0.75px;background:#9a9a9a"></div><div class="a" style="left:9.00px;top:94.16px;width:2.61px;height:0.75px;background:#5f90ad"></div><div class="a" style="left:12.21px;top:94.16px;width:2.72px;height:0.75px;background:#5f90ad"></div><div class="a" style="left:15.53px;top:94.16px;width:2.57px;height:0.75px;background:#5f90ad"></div><div class="a" style="left:3.00px;top:95.32px;width:6.73px;height:0.75px;background:#5f8a4e"></div><div class="a" style="left:3.00px;top:96.48px;width:4.06px;height:0.75px;background:#a8a878"></div><div class="a" style="left:7.66px;top:96.48px;width:3.63px;height:0.75px;background:#a8a878"></div><div class="a" style="left:11.89px;top:96.48px;width:2.76px;height:0.75px;background:#a8a878"></div><div class="a" style="left:15.25px;top:96.48px;width:3.70px;height:0.75px;background:#a8a878"></div><div class="a" style="left:3.00px;top:97.64px;width:4.22px;height:0.75px;background:#9a9a9a"></div><div class="a" style="left:7.82px;top:97.64px;width:5.25px;height:0.75px;background:#9a9a9a"></div><div class="a" style="left:5.00px;top:98.80px;width:4.58px;height:0.75px;background:#5f8a4e"></div><div class="a" style="left:10.18px;top:98.80px;width:1.59px;height:0.75px;background:#5f8a4e"></div><div class="a" style="left:12.37px;top:98.80px;width:2.25px;height:0.75px;background:#5f8a4e"></div><div class="a" style="left:7.00px;top:99.96px;width:4.53px;height:0.75px;background:#5f8a4e"></div><div class="a" style="left:12.13px;top:99.96px;width:7.40px;height:0.75px;background:#5f8a4e"></div><div class="a" style="left:20.12px;top:99.96px;width:6.33px;height:0.75px;background:#5f8a4e"></div><div class="a" style="left:27.05px;top:99.96px;width:1.74px;height:0.75px;background:#5f8a4e"></div><div class="a" style="left:5.00px;top:101.12px;width:3.48px;height:0.75px;background:#5f90ad"></div><div class="a" style="left:9.08px;top:101.12px;width:4.65px;height:0.75px;background:#5f90ad"></div><div class="a" style="left:7.00px;top:102.28px;width:5.84px;height:0.75px;background:#9a9a9a"></div><div class="a" style="left:13.44px;top:102.28px;width:1.92px;height:0.75px;background:#9a9a9a"></div><div class="a" style="left:15.96px;top:102.28px;width:3.55px;height:0.75px;background:#9a9a9a"></div><div class="a" style="left:20.11px;top:102.28px;width:3.25px;height:0.75px;background:#9a9a9a"></div><div class="a" style="left:9.00px;top:104.60px;width:7.17px;height:0.75px;background:#9a9a9a"></div><div class="a" style="left:16.77px;top:104.60px;width:3.73px;height:0.75px;background:#9a9a9a"></div><div class="a" style="left:7.00px;top:105.76px;width:1.96px;height:0.75px;background:#5f8a4e"></div><div class="a" style="left:9.56px;top:105.76px;width:4.59px;height:0.75px;background:#5f8a4e"></div><div class="a" style="left:14.75px;top:105.76px;width:2.35px;height:0.75px;background:#5f8a4e"></div><div class="a" style="left:9.00px;top:109.24px;width:2.15px;height:0.75px;background:#9a9a9a"></div><div class="a" style="left:11.75px;top:109.24px;width:2.92px;height:0.75px;background:#9a9a9a"></div><div class="a" style="left:15.27px;top:109.24px;width:1.94px;height:0.75px;background:#9a9a9a"></div><div class="a" style="left:5.00px;top:110.40px;width:2.09px;height:0.75px;background:#b08060"></div><div class="a" style="left:7.69px;top:110.40px;width:3.01px;height:0.75px;background:#b08060"></div><div class="a" style="left:11.30px;top:110.40px;width:6.93px;height:0.75px;background:#b08060"></div><div class="a" style="left:18.83px;top:110.40px;width:1.69px;height:0.75px;background:#b08060"></div><div class="a" style="left:9.00px;top:111.56px;width:2.10px;height:0.75px;background:#5f8a4e"></div><div class="a" style="left:11.70px;top:111.56px;width:4.17px;height:0.75px;background:#5f8a4e"></div><div class="a" style="left:16.46px;top:111.56px;width:5.37px;height:0.75px;background:#5f8a4e"></div><div class="a" style="left:22.43px;top:111.56px;width:4.80px;height:0.75px;background:#5f8a4e"></div><div class="a" style="left:27.83px;top:111.56px;width:5.51px;height:0.75px;background:#5f8a4e"></div><div class="a" style="left:33.94px;top:111.56px;width:3.76px;height:0.75px;background:#5f8a4e"></div><div class="a" style="left:5.00px;top:112.72px;width:2.51px;height:0.75px;background:#5f90ad"></div><div class="a" style="left:8.11px;top:112.72px;width:4.47px;height:0.75px;background:#5f90ad"></div><div class="a" style="left:13.19px;top:112.72px;width:5.17px;height:0.75px;background:#5f90ad"></div><div class="a" style="left:18.95px;top:112.72px;width:1.85px;height:0.75px;background:#5f90ad"></div><div class="a" style="left:21.41px;top:112.72px;width:1.80px;height:0.75px;background:#5f90ad"></div><div class="a" style="left:9.00px;top:113.88px;width:3.69px;height:0.75px;background:#5f90ad"></div><div class="a" style="left:13.29px;top:113.88px;width:3.21px;height:0.75px;background:#5f90ad"></div><div class="a" style="left:17.11px;top:113.88px;width:5.43px;height:0.75px;background:#5f90ad"></div><div class="a" style="left:23.14px;top:113.88px;width:4.86px;height:0.75px;background:#5f90ad"></div><div class="a" style="left:28.60px;top:113.88px;width:2.14px;height:0.75px;background:#5f90ad"></div><div class="a" style="left:5.00px;top:115.04px;width:2.97px;height:0.75px;background:#9a9a9a"></div><div class="a" style="left:8.57px;top:115.04px;width:1.76px;height:0.75px;background:#9a9a9a"></div><div class="a" style="left:7.00px;top:117.36px;width:5.99px;height:0.75px;background:#9a9a9a"></div><div class="a" style="left:13.59px;top:117.36px;width:1.80px;height:0.75px;background:#9a9a9a"></div><div class="a" style="left:15.99px;top:117.36px;width:7.43px;height:0.75px;background:#9a9a9a"></div><div class="a" style="left:24.02px;top:117.36px;width:7.17px;height:0.75px;background:#9a9a9a"></div><div class="a" style="left:31.79px;top:117.36px;width:1.94px;height:0.75px;background:#9a9a9a"></div><div class="a" style="left:34.33px;top:117.36px;width:2.80px;height:0.75px;background:#9a9a9a"></div><div class="a" style="left:7.00px;top:118.52px;width:2.96px;height:0.75px;background:#a8a878"></div><div class="a" style="left:10.56px;top:118.52px;width:4.64px;height:0.75px;background:#a8a878"></div><div class="a" style="left:15.80px;top:118.52px;width:7.12px;height:0.75px;background:#a8a878"></div><div class="a" style="left:23.53px;top:118.52px;width:5.84px;height:0.75px;background:#a8a878"></div><div class="a" style="left:29.96px;top:118.52px;width:4.31px;height:0.75px;background:#a8a878"></div><div class="a" style="left:34.87px;top:118.52px;width:4.38px;height:0.75px;background:#a8a878"></div><div class="a" style="left:9.00px;top:119.68px;width:5.25px;height:0.75px;background:#b08060"></div><div class="a" style="left:14.85px;top:119.68px;width:2.38px;height:0.75px;background:#b08060"></div><div class="a" style="left:3.00px;top:123.16px;width:5.51px;height:0.75px;background:#a8a878"></div><div class="a" style="left:9.11px;top:123.16px;width:4.23px;height:0.75px;background:#a8a878"></div><div class="a" style="left:13.94px;top:123.16px;width:3.07px;height:0.75px;background:#a8a878"></div><div class="a" style="left:17.61px;top:123.16px;width:2.79px;height:0.75px;background:#a8a878"></div><div class="a" style="left:9.00px;top:124.32px;width:5.91px;height:0.75px;background:#9a9a9a"></div><div class="a" style="left:15.51px;top:124.32px;width:2.93px;height:0.75px;background:#9a9a9a"></div><div class="a" style="left:19.04px;top:124.32px;width:2.18px;height:0.75px;background:#9a9a9a"></div><div class="a" style="left:21.82px;top:124.32px;width:6.86px;height:0.75px;background:#9a9a9a"></div><div class="a" style="left:29.28px;top:124.32px;width:6.21px;height:0.75px;background:#9a9a9a"></div><div class="a" style="left:36.08px;top:124.32px;width:4.59px;height:0.75px;background:#9a9a9a"></div><div class="a" style="left:5.00px;top:125.48px;width:4.89px;height:0.75px;background:#5f8a4e"></div><div class="a" style="left:10.49px;top:125.48px;width:5.05px;height:0.75px;background:#5f8a4e"></div><div class="a" style="left:16.14px;top:125.48px;width:5.30px;height:0.75px;background:#5f8a4e"></div><div class="a" style="left:22.04px;top:125.48px;width:6.02px;height:0.75px;background:#5f8a4e"></div><div class="a" style="left:28.66px;top:125.48px;width:0.52px;height:0.75px;background:#5f8a4e"></div><div class="a" style="left:5.00px;top:127.80px;width:1.86px;height:0.75px;background:#b08060"></div><div class="a" style="left:7.46px;top:127.80px;width:3.13px;height:0.75px;background:#b08060"></div><div class="a" style="left:9.00px;top:128.96px;width:4.75px;height:0.75px;background:#9a9a9a"></div><div class="a" style="left:14.35px;top:128.96px;width:1.93px;height:0.75px;background:#9a9a9a"></div><div class="a" style="left:9.00px;top:131.28px;width:3.74px;height:0.75px;background:#9a9a9a"></div><div class="a" style="left:13.34px;top:131.28px;width:4.37px;height:0.75px;background:#9a9a9a"></div><div class="a" style="left:18.31px;top:131.28px;width:2.76px;height:0.75px;background:#9a9a9a"></div><div class="a" style="left:21.67px;top:131.28px;width:3.56px;height:0.75px;background:#9a9a9a"></div><div class="a" style="left:25.84px;top:131.28px;width:5.83px;height:0.75px;background:#9a9a9a"></div><div class="a" style="left:3.00px;top:132.44px;width:6.43px;height:0.75px;background:#9a9a9a"></div><div class="a" style="left:10.03px;top:132.44px;width:6.53px;height:0.75px;background:#9a9a9a"></div><div class="a" style="left:17.16px;top:132.44px;width:3.36px;height:0.75px;background:#9a9a9a"></div><div class="a" style="left:5.00px;top:133.60px;width:3.71px;height:0.75px;background:#5f90ad"></div><div class="a" style="left:9.31px;top:133.60px;width:5.42px;height:0.75px;background:#5f90ad"></div><div class="a" style="left:15.34px;top:133.60px;width:7.44px;height:0.75px;background:#5f90ad"></div><div class="a" style="left:23.37px;top:133.60px;width:3.45px;height:0.75px;background:#5f90ad"></div><div class="a" style="left:27.42px;top:133.60px;width:4.79px;height:0.75px;background:#5f90ad"></div><div class="a" style="left:5.00px;top:134.76px;width:4.98px;height:0.75px;background:#5f90ad"></div><div class="a" style="left:10.58px;top:134.76px;width:4.27px;height:0.75px;background:#5f90ad"></div><div class="a" style="left:15.46px;top:134.76px;width:3.44px;height:0.75px;background:#5f90ad"></div><div class="a" style="left:19.50px;top:134.76px;width:4.76px;height:0.75px;background:#5f90ad"></div><div class="a" style="left:24.86px;top:134.76px;width:3.44px;height:0.75px;background:#5f90ad"></div><div class="a" style="left:7.00px;top:135.92px;width:1.56px;height:0.75px;background:#a8a878"></div><div class="a" style="left:9.16px;top:135.92px;width:3.36px;height:0.75px;background:#a8a878"></div><div class="a" style="left:13.12px;top:135.92px;width:6.96px;height:0.75px;background:#a8a878"></div><div class="a" style="left:20.68px;top:135.92px;width:5.12px;height:0.75px;background:#a8a878"></div><div class="a" style="left:26.40px;top:135.92px;width:5.67px;height:0.75px;background:#a8a878"></div><div class="a" style="left:32.67px;top:135.92px;width:2.38px;height:0.75px;background:#a8a878"></div><div class="a" style="left:5.00px;top:137.08px;width:2.81px;height:0.75px;background:#a8a878"></div><div class="a" style="left:8.41px;top:137.08px;width:5.44px;height:0.75px;background:#a8a878"></div><div class="a" style="left:14.46px;top:137.08px;width:3.46px;height:0.75px;background:#a8a878"></div><div class="a" style="left:18.52px;top:137.08px;width:6.94px;height:0.75px;background:#a8a878"></div><div class="a" style="left:26.06px;top:137.08px;width:3.43px;height:0.75px;background:#a8a878"></div><div class="a" style="left:30.09px;top:137.08px;width:4.15px;height:0.75px;background:#a8a878"></div><div class="a" style="left:5.00px;top:138.24px;width:7.45px;height:0.75px;background:#5f90ad"></div><div class="a" style="left:13.05px;top:138.24px;width:4.25px;height:0.75px;background:#5f90ad"></div><div class="a" style="left:17.90px;top:138.24px;width:2.83px;height:0.75px;background:#5f90ad"></div><div class="a" style="left:21.33px;top:138.24px;width:3.51px;height:0.75px;background:#5f90ad"></div><div class="a" style="left:9.00px;top:139.40px;width:6.47px;height:0.75px;background:#9a9a9a"></div><div class="a" style="left:16.07px;top:139.40px;width:0.29px;height:0.75px;background:#9a9a9a"></div><div class="a" style="left:9.00px;top:140.56px;width:5.93px;height:0.75px;background:#5f90ad"></div><div class="a" style="left:15.53px;top:140.56px;width:3.71px;height:0.75px;background:#5f90ad"></div><div class="a" style="left:19.84px;top:140.56px;width:3.84px;height:0.75px;background:#5f90ad"></div><div class="a" style="left:24.28px;top:140.56px;width:2.43px;height:0.75px;background:#5f90ad"></div><div class="a" style="left:27.31px;top:140.56px;width:5.05px;height:0.75px;background:#5f90ad"></div><div class="a" style="left:32.96px;top:140.56px;width:2.56px;height:0.75px;background:#5f90ad"></div><div class="a" style="left:36.12px;top:140.56px;width:0.17px;height:0.75px;background:#5f90ad"></div><div class="a" style="left:5.00px;top:141.72px;width:1.85px;height:0.75px;background:#9a9a9a"></div><div class="a" style="left:7.45px;top:141.72px;width:2.45px;height:0.75px;background:#9a9a9a"></div><div class="a" style="left:10.50px;top:141.72px;width:3.28px;height:0.75px;background:#9a9a9a"></div><div class="a" style="left:14.37px;top:141.72px;width:1.63px;height:0.75px;background:#9a9a9a"></div><div class="a" style="left:7.00px;top:142.88px;width:3.33px;height:0.75px;background:#9a9a9a"></div><div class="a" style="left:10.93px;top:142.88px;width:4.77px;height:0.75px;background:#9a9a9a"></div><div class="a" style="left:16.31px;top:142.88px;width:3.51px;height:0.75px;background:#9a9a9a"></div><div class="a" style="left:20.41px;top:142.88px;width:3.14px;height:0.75px;background:#9a9a9a"></div><div class="a" style="left:24.15px;top:142.88px;width:2.13px;height:0.75px;background:#9a9a9a"></div><div class="a" style="left:26.89px;top:142.88px;width:1.41px;height:0.75px;background:#9a9a9a"></div><div class="a" style="left:3.00px;top:145.20px;width:4.03px;height:0.75px;background:#b08060"></div><div class="a" style="left:7.63px;top:145.20px;width:5.77px;height:0.75px;background:#b08060"></div><div class="a" style="left:14.01px;top:145.20px;width:4.43px;height:0.75px;background:#b08060"></div><div class="a" style="left:19.04px;top:145.20px;width:6.95px;height:0.75px;background:#b08060"></div><div class="a" style="left:26.59px;top:145.20px;width:3.53px;height:0.75px;background:#b08060"></div><div class="a" style="left:30.72px;top:145.20px;width:0.14px;height:0.75px;background:#b08060"></div><div class="a" style="left:5.00px;top:146.36px;width:4.43px;height:0.75px;background:#b08060"></div><div class="a" style="left:10.03px;top:146.36px;width:3.80px;height:0.75px;background:#b08060"></div><div class="a" style="left:3.00px;top:148.68px;width:7.41px;height:0.75px;background:#5f90ad"></div><div class="a" style="left:11.01px;top:148.68px;width:3.59px;height:0.75px;background:#5f90ad"></div><div class="a" style="left:15.21px;top:148.68px;width:1.52px;height:0.75px;background:#5f90ad"></div><div class="a" style="left:17.33px;top:148.68px;width:3.77px;height:0.75px;background:#5f90ad"></div><div class="a" style="left:21.70px;top:148.68px;width:2.04px;height:0.75px;background:#5f90ad"></div><div class="a" style="left:24.34px;top:148.68px;width:4.29px;height:0.75px;background:#5f90ad"></div><div class="a" style="left:3.00px;top:149.84px;width:1.56px;height:0.75px;background:#5f8a4e"></div><div class="a" style="left:5.16px;top:149.84px;width:2.16px;height:0.75px;background:#5f8a4e"></div><div class="a" style="left:7.92px;top:149.84px;width:7.04px;height:0.75px;background:#5f8a4e"></div><div class="a" style="left:15.56px;top:149.84px;width:2.58px;height:0.75px;background:#5f8a4e"></div><div class="a" style="left:5.00px;top:153.32px;width:4.05px;height:0.75px;background:#a8a878"></div><div class="a" style="left:9.65px;top:153.32px;width:3.25px;height:0.75px;background:#a8a878"></div><div class="a" style="left:13.50px;top:153.32px;width:2.22px;height:0.75px;background:#a8a878"></div><div class="a" style="left:3.00px;top:155.64px;width:6.16px;height:0.75px;background:#a8a878"></div><div class="a" style="left:9.76px;top:155.64px;width:2.58px;height:0.75px;background:#a8a878"></div><div class="a" style="left:12.93px;top:155.64px;width:1.87px;height:0.75px;background:#a8a878"></div><div class="a" style="left:15.41px;top:155.64px;width:4.25px;height:0.75px;background:#a8a878"></div><div class="a" style="left:20.26px;top:155.64px;width:5.00px;height:0.75px;background:#a8a878"></div><div class="a" style="left:25.86px;top:155.64px;width:0.28px;height:0.75px;background:#a8a878"></div><div class="a" style="left:9.00px;top:162.60px;width:2.61px;height:0.75px;background:#5f8a4e"></div><div class="a" style="left:12.21px;top:162.60px;width:3.19px;height:0.75px;background:#5f8a4e"></div><div class="a" style="left:16.00px;top:162.60px;width:2.54px;height:0.75px;background:#5f8a4e"></div><div class="a" style="left:19.13px;top:162.60px;width:1.14px;height:0.75px;background:#5f8a4e"></div><div class="a" style="left:9.00px;top:163.76px;width:3.06px;height:0.75px;background:#5f8a4e"></div><div class="a" style="left:12.66px;top:163.76px;width:6.82px;height:0.75px;background:#5f8a4e"></div><div class="a" style="left:20.09px;top:163.76px;width:6.99px;height:0.75px;background:#5f8a4e"></div><div class="a" style="left:9.00px;top:164.92px;width:2.83px;height:0.75px;background:#9a9a9a"></div><div class="a" style="left:12.43px;top:164.92px;width:1.80px;height:0.75px;background:#9a9a9a"></div><div class="a" style="left:14.82px;top:164.92px;width:7.19px;height:0.75px;background:#9a9a9a"></div><div class="a" style="left:22.61px;top:164.92px;width:4.90px;height:0.75px;background:#9a9a9a"></div><div class="a" style="left:9.00px;top:166.08px;width:6.23px;height:0.75px;background:#5f8a4e"></div><div class="a" style="left:15.83px;top:166.08px;width:1.85px;height:0.75px;background:#5f8a4e"></div><div class="a" style="left:18.27px;top:166.08px;width:7.05px;height:0.75px;background:#5f8a4e"></div><div class="a" style="left:25.92px;top:166.08px;width:6.85px;height:0.75px;background:#5f8a4e"></div><div class="a" style="left:33.37px;top:166.08px;width:2.30px;height:0.75px;background:#5f8a4e"></div><div class="a" style="left:7.00px;top:167.24px;width:5.14px;height:0.75px;background:#9a9a9a"></div><div class="a" style="left:12.74px;top:167.24px;width:2.44px;height:0.75px;background:#9a9a9a"></div><div class="a" style="left:15.78px;top:167.24px;width:2.44px;height:0.75px;background:#9a9a9a"></div><div class="a" style="left:18.82px;top:167.24px;width:3.43px;height:0.75px;background:#9a9a9a"></div><div class="a" style="left:22.85px;top:167.24px;width:3.06px;height:0.75px;background:#9a9a9a"></div><div class="a" style="left:26.51px;top:167.24px;width:5.46px;height:0.75px;background:#9a9a9a"></div><div class="a" style="left:9.00px;top:168.40px;width:1.82px;height:0.75px;background:#a8a878"></div><div class="a" style="left:11.42px;top:168.40px;width:4.93px;height:0.75px;background:#a8a878"></div><div class="a" style="left:16.95px;top:168.40px;width:2.57px;height:0.75px;background:#a8a878"></div><div class="a" style="left:20.12px;top:168.40px;width:2.73px;height:0.75px;background:#a8a878"></div><div class="a" style="left:23.44px;top:168.40px;width:5.00px;height:0.75px;background:#a8a878"></div><div class="a" style="left:9.00px;top:171.88px;width:6.84px;height:0.75px;background:#b08060"></div><div class="a" style="left:16.44px;top:171.88px;width:5.66px;height:0.75px;background:#b08060"></div><div class="a" style="left:22.70px;top:171.88px;width:2.00px;height:0.75px;background:#b08060"></div><div class="a" style="left:25.30px;top:171.88px;width:3.49px;height:0.75px;background:#b08060"></div><div class="a" style="left:9.00px;top:173.04px;width:2.63px;height:0.75px;background:#a8a878"></div><div class="a" style="left:12.23px;top:173.04px;width:2.31px;height:0.75px;background:#a8a878"></div><div class="a" style="left:7.00px;top:174.20px;width:3.98px;height:0.75px;background:#9a9a9a"></div><div class="a" style="left:11.58px;top:174.20px;width:1.46px;height:0.75px;background:#9a9a9a"></div><div class="a" style="left:5.00px;top:175.36px;width:1.96px;height:0.75px;background:#a8a878"></div><div class="a" style="left:7.56px;top:175.36px;width:3.33px;height:0.75px;background:#a8a878"></div><div class="a" style="left:11.49px;top:175.36px;width:4.30px;height:0.75px;background:#a8a878"></div><div class="a" style="left:16.39px;top:175.36px;width:2.31px;height:0.75px;background:#a8a878"></div><div class="a" style="left:5.00px;top:176.52px;width:5.56px;height:0.75px;background:#9a9a9a"></div><div class="a" style="left:11.16px;top:176.52px;width:5.98px;height:0.75px;background:#9a9a9a"></div><div class="a" style="left:17.73px;top:176.52px;width:6.21px;height:0.75px;background:#9a9a9a"></div><div class="a" style="left:24.54px;top:176.52px;width:2.23px;height:0.75px;background:#9a9a9a"></div><div class="a" style="left:27.37px;top:176.52px;width:1.32px;height:0.75px;background:#9a9a9a"></div><div class="a" style="left:7.00px;top:177.68px;width:2.18px;height:0.75px;background:#9a9a9a"></div><div class="a" style="left:9.78px;top:177.68px;width:6.13px;height:0.75px;background:#9a9a9a"></div><div class="a" style="left:16.51px;top:177.68px;width:3.71px;height:0.75px;background:#9a9a9a"></div><div class="a" style="left:5.00px;top:178.84px;width:5.27px;height:0.75px;background:#5f8a4e"></div><div class="a" style="left:10.87px;top:178.84px;width:3.39px;height:0.75px;background:#5f8a4e"></div><div class="a" style="left:5.00px;top:180.00px;width:2.02px;height:0.75px;background:#5f90ad"></div><div class="a" style="left:7.62px;top:180.00px;width:2.63px;height:0.75px;background:#5f90ad"></div><div class="a" style="left:10.85px;top:180.00px;width:3.76px;height:0.75px;background:#5f90ad"></div><div class="a" style="left:15.21px;top:180.00px;width:2.16px;height:0.75px;background:#5f90ad"></div><div class="a" style="left:17.97px;top:180.00px;width:3.36px;height:0.75px;background:#5f90ad"></div><div class="a" style="left:21.93px;top:180.00px;width:3.14px;height:0.75px;background:#5f90ad"></div><div class="a" style="left:5.00px;top:181.16px;width:2.05px;height:0.75px;background:#5f90ad"></div><div class="a" style="left:7.65px;top:181.16px;width:2.34px;height:0.75px;background:#5f90ad"></div><div class="a" style="left:10.60px;top:181.16px;width:2.07px;height:0.75px;background:#5f90ad"></div><div class="a" style="left:13.26px;top:181.16px;width:5.57px;height:0.75px;background:#5f90ad"></div><div class="a" style="left:19.43px;top:181.16px;width:5.75px;height:0.75px;background:#5f90ad"></div><div class="a" style="left:25.78px;top:181.16px;width:2.58px;height:0.75px;background:#5f90ad"></div><div class="a" style="left:28.96px;top:181.16px;width:3.91px;height:0.75px;background:#5f90ad"></div><div class="a" style="left:9.00px;top:182.32px;width:2.86px;height:0.75px;background:#b08060"></div><div class="a" style="left:12.46px;top:182.32px;width:2.44px;height:0.75px;background:#b08060"></div><div class="a" style="left:15.50px;top:182.32px;width:1.02px;height:0.75px;background:#b08060"></div><div class="a" style="left:3.00px;top:183.48px;width:4.06px;height:0.75px;background:#a8a878"></div><div class="a" style="left:7.66px;top:183.48px;width:4.57px;height:0.75px;background:#a8a878"></div><div class="a" style="left:12.83px;top:183.48px;width:5.38px;height:0.75px;background:#a8a878"></div><div class="a" style="left:18.81px;top:183.48px;width:6.10px;height:0.75px;background:#a8a878"></div><div class="a" style="left:25.52px;top:183.48px;width:6.43px;height:0.75px;background:#a8a878"></div><div class="a" style="left:32.54px;top:183.48px;width:1.23px;height:0.75px;background:#a8a878"></div><div class="a" style="left:7.00px;top:184.64px;width:3.90px;height:0.75px;background:#5f8a4e"></div><div class="a" style="left:11.50px;top:184.64px;width:0.93px;height:0.75px;background:#5f8a4e"></div><div class="a" style="left:5.00px;top:185.80px;width:4.68px;height:0.75px;background:#b08060"></div><div class="a" style="left:10.28px;top:185.80px;width:3.06px;height:0.75px;background:#b08060"></div><div class="a" style="left:13.94px;top:185.80px;width:2.63px;height:0.75px;background:#b08060"></div><div class="a" style="left:17.18px;top:185.80px;width:3.34px;height:0.75px;background:#b08060"></div><div class="a" style="left:21.12px;top:185.80px;width:4.15px;height:0.75px;background:#b08060"></div><div class="a" style="left:25.86px;top:185.80px;width:4.84px;height:0.75px;background:#b08060"></div><div class="a" style="left:31.31px;top:185.80px;width:2.73px;height:0.75px;background:#b08060"></div><div class="a" style="left:34.64px;top:185.80px;width:2.96px;height:0.75px;background:#b08060"></div><div class="a" style="left:3.00px;top:186.96px;width:3.02px;height:0.75px;background:#5f8a4e"></div><div class="a" style="left:6.62px;top:186.96px;width:4.73px;height:0.75px;background:#5f8a4e"></div><div class="a" style="left:11.96px;top:186.96px;width:3.29px;height:0.75px;background:#5f8a4e"></div><div class="a" style="left:15.85px;top:186.96px;width:2.90px;height:0.75px;background:#5f8a4e"></div><div class="a" style="left:19.35px;top:186.96px;width:5.17px;height:0.75px;background:#5f8a4e"></div><div class="a" style="left:25.12px;top:186.96px;width:2.85px;height:0.75px;background:#5f8a4e"></div><div class="a" style="left:5.00px;top:188.12px;width:5.74px;height:0.75px;background:#5f8a4e"></div><div class="a" style="left:11.34px;top:188.12px;width:7.12px;height:0.75px;background:#5f8a4e"></div><div class="a" style="left:19.06px;top:188.12px;width:4.90px;height:0.75px;background:#5f8a4e"></div><div class="a" style="left:24.56px;top:188.12px;width:1.66px;height:0.75px;background:#5f8a4e"></div><div class="a" style="left:26.82px;top:188.12px;width:5.46px;height:0.75px;background:#5f8a4e"></div><div class="a" style="left:32.88px;top:188.12px;width:5.08px;height:0.75px;background:#5f8a4e"></div><div class="a" style="left:7.00px;top:190.44px;width:2.05px;height:0.75px;background:#b08060"></div><div class="a" style="left:9.65px;top:190.44px;width:6.74px;height:0.75px;background:#b08060"></div><div class="a" style="left:16.99px;top:190.44px;width:3.10px;height:0.75px;background:#b08060"></div><div class="a" style="left:20.68px;top:190.44px;width:0.66px;height:0.75px;background:#b08060"></div><div class="a" style="left:5.00px;top:191.60px;width:4.76px;height:0.75px;background:#9a9a9a"></div><div class="a" style="left:10.36px;top:191.60px;width:4.86px;height:0.75px;background:#9a9a9a"></div><div class="a" style="left:15.82px;top:191.60px;width:4.86px;height:0.75px;background:#9a9a9a"></div><div class="a" style="left:21.29px;top:191.60px;width:3.09px;height:0.75px;background:#9a9a9a"></div><div class="a" style="left:24.97px;top:191.60px;width:6.96px;height:0.75px;background:#9a9a9a"></div><div class="a" style="left:32.53px;top:191.60px;width:2.78px;height:0.75px;background:#9a9a9a"></div><div class="a" style="left:9.00px;top:192.76px;width:6.45px;height:0.75px;background:#9a9a9a"></div><div class="a" style="left:16.05px;top:192.76px;width:1.39px;height:0.75px;background:#9a9a9a"></div><div class="a" style="left:5.00px;top:193.92px;width:2.50px;height:0.75px;background:#5f8a4e"></div><div class="a" style="left:8.10px;top:193.92px;width:5.09px;height:0.75px;background:#5f8a4e"></div><div class="a" style="left:13.78px;top:193.92px;width:6.37px;height:0.75px;background:#5f8a4e"></div><div class="a" style="left:7.00px;top:195.08px;width:7.08px;height:0.75px;background:#9a9a9a"></div><div class="a" style="left:14.68px;top:195.08px;width:7.49px;height:0.75px;background:#9a9a9a"></div><div class="a" style="left:22.77px;top:195.08px;width:2.33px;height:0.75px;background:#9a9a9a"></div><div class="a" style="left:25.70px;top:195.08px;width:6.04px;height:0.75px;background:#9a9a9a"></div><div class="a" style="left:32.34px;top:195.08px;width:1.58px;height:0.75px;background:#9a9a9a"></div><div class="a" style="left:9.00px;top:196.24px;width:6.08px;height:0.75px;background:#5f8a4e"></div><div class="a" style="left:15.68px;top:196.24px;width:2.45px;height:0.75px;background:#5f8a4e"></div><div class="a" style="left:18.73px;top:196.24px;width:3.97px;height:0.75px;background:#5f8a4e"></div><div class="a" style="left:23.30px;top:196.24px;width:1.70px;height:0.75px;background:#5f8a4e"></div><div class="a" style="left:25.60px;top:196.24px;width:4.67px;height:0.75px;background:#5f8a4e"></div><div class="a" style="left:30.87px;top:196.24px;width:1.06px;height:0.75px;background:#5f8a4e"></div><div class="a" style="left:5.00px;top:197.40px;width:2.96px;height:0.75px;background:#5f8a4e"></div><div class="a" style="left:8.56px;top:197.40px;width:5.12px;height:0.75px;background:#5f8a4e"></div><div class="a" style="left:5.00px;top:199.72px;width:5.10px;height:0.75px;background:#5f90ad"></div><div class="a" style="left:10.70px;top:199.72px;width:4.32px;height:0.75px;background:#5f90ad"></div><div class="a" style="left:15.62px;top:199.72px;width:3.97px;height:0.75px;background:#5f90ad"></div><div class="a" style="left:20.19px;top:199.72px;width:5.24px;height:0.75px;background:#5f90ad"></div><div class="a" style="left:26.03px;top:199.72px;width:5.64px;height:0.75px;background:#5f90ad"></div><div class="a" style="left:32.27px;top:199.72px;width:4.59px;height:0.75px;background:#5f90ad"></div><div class="a" style="left:7.00px;top:200.88px;width:6.63px;height:0.75px;background:#5f90ad"></div><div class="a" style="left:14.23px;top:200.88px;width:3.95px;height:0.75px;background:#5f90ad"></div><div class="a" style="left:18.78px;top:200.88px;width:4.10px;height:0.75px;background:#5f90ad"></div><div class="a" style="left:23.49px;top:200.88px;width:4.90px;height:0.75px;background:#5f90ad"></div><div class="a" style="left:28.98px;top:200.88px;width:6.49px;height:0.75px;background:#5f90ad"></div><div class="a" style="left:9.00px;top:202.04px;width:6.93px;height:0.75px;background:#5f8a4e"></div><div class="a" style="left:16.53px;top:202.04px;width:3.42px;height:0.75px;background:#5f8a4e"></div><div class="a" style="left:20.55px;top:202.04px;width:1.83px;height:0.75px;background:#5f8a4e"></div><div class="a" style="left:22.98px;top:202.04px;width:3.12px;height:0.75px;background:#5f8a4e"></div><div class="a" style="left:7.00px;top:203.20px;width:6.24px;height:0.75px;background:#5f8a4e"></div><div class="a" style="left:13.84px;top:203.20px;width:6.80px;height:0.75px;background:#5f8a4e"></div><div class="a" style="left:5.00px;top:204.36px;width:2.95px;height:0.75px;background:#9a9a9a"></div><div class="a" style="left:8.55px;top:204.36px;width:6.74px;height:0.75px;background:#9a9a9a"></div><div class="a" style="left:15.89px;top:204.36px;width:7.34px;height:0.75px;background:#9a9a9a"></div><div class="a" style="left:23.83px;top:204.36px;width:4.35px;height:0.75px;background:#9a9a9a"></div><div class="a" style="left:28.78px;top:204.36px;width:2.13px;height:0.75px;background:#9a9a9a"></div><div class="a" style="left:31.51px;top:204.36px;width:2.13px;height:0.75px;background:#9a9a9a"></div><div class="a" style="left:7.00px;top:205.52px;width:7.50px;height:0.75px;background:#9a9a9a"></div><div class="a" style="left:15.10px;top:205.52px;width:5.88px;height:0.75px;background:#9a9a9a"></div><div class="a" style="left:21.58px;top:205.52px;width:6.73px;height:0.75px;background:#9a9a9a"></div><div class="a" style="left:28.91px;top:205.52px;width:3.71px;height:0.75px;background:#9a9a9a"></div><div class="a" style="left:33.22px;top:205.52px;width:3.41px;height:0.75px;background:#9a9a9a"></div></div></div>
<div class="a" style="left:564px;top:144px;width:50px;height:1px;background:#7a4510"></div>
<div class="a" style="left:564px;top:190px;width:50px;height:1px;background:#7a4510"></div>
<div class="a" style="left:564.5px;top:207px;width:38.5px;height:6.5px;background:#ececec"></div>
<div class="a" style="left:603px;top:207px;width:11.5px;height:6.5px;background:#9a9a9a"></div>
<div class="a" style="left:564.5px;top:213.5px;width:21px;height:1px;background:#ececec"></div>
<div class="a" style="left:587px;top:208.8px;width:15px;height:0.8px;background:#9a9a9a"></div>
<div class="a" style="left:593px;top:211.5px;width:9px;height:0.8px;background:#b0b0b0"></div>
<div class="a" style="left:583px;top:208.5px;width:3px;height:1px;background:#e09040"></div>
<div class="a" style="left:615px;top:79px;width:1px;height:401px;background:#1a1a1a"></div>
<div class="a" style="left:617.5px;top:194px;width:3.5px;height:3px;background:#d07a1a"></div>
<div class="a" style="left:617.5px;top:272.8px;width:3.5px;height:3px;background:#d07a1a"></div>
<div class="a" style="left:617.5px;top:305.2px;width:3.5px;height:3px;background:#d07a1a"></div>
<div class="a" style="left:615px;top:302px;width:7px;height:1px;background:#9a9a9a"></div>
<div class="a" style="left:0;top:136px;width:3px;height:1px;background:#4f93aa"></div>
<div class="a" style="left:0;top:137px;width:3px;height:1px;background:#4f93aa"></div>
<div class="a" style="left:0;top:138px;width:3px;height:1px;background:#4f93aa"></div>
<div class="a" style="left:0;top:139px;width:3px;height:1px;background:#4f93aa"></div>
<div class="a" style="left:0;top:140px;width:3px;height:1px;background:#4f93aa"></div>
<div class="a" style="left:0;top:141px;width:3px;height:1px;background:#4f93aa"></div>
<div class="a" style="left:0;top:142px;width:3px;height:1px;background:#4f93aa"></div>
<div class="a" style="left:0;top:143px;width:3px;height:1px;background:#4f93aa"></div>
<div class="a" style="left:0;top:144px;width:3px;height:1px;background:#4f93aa"></div>
<div class="a" style="left:0;top:145px;width:3px;height:1px;background:#4f93aa"></div>
<div class="a" style="left:0;top:146px;width:3px;height:1px;background:#4f93aa"></div>
<div class="a" style="left:0;top:147px;width:3px;height:1px;background:#4f93aa"></div>
<div class="a" style="left:0;top:219px;width:2px;height:2px;background:#bbb"></div>
<div class="a" style="left:0;top:244px;width:2px;height:2px;background:#a06020"></div>
<div class="a" style="left:0;top:257px;width:2px;height:2px;background:#bbb"></div>
<div class="a" style="left:0;top:283px;width:2px;height:2px;background:#bbb"></div>
<div class="a" style="left:0;top:295px;width:2px;height:2px;background:#a06020"></div>
<div class="a" style="left:0;top:308px;width:2px;height:2px;background:#b08050"></div>
<div class="a" style="left:0;top:345px;width:2px;height:2px;background:#803030"></div>
<div class="a" style="left:0;top:313px;width:2px;height:14px;background:repeating-linear-gradient(#a06020 0 1px,#000 1px 2px)"></div>
<div class="a" style="left:355px;top:417px;width:262px;height:62px;background:#0c141f;border:1px solid #3f7486;border-radius:3px"></div>
<svg class="a" style="left:360.5px;top:425px" width="10" height="10" viewBox="0 0 10 10"><circle cx="5" cy="5" r="4.2" fill="none" stroke="#3794ff" stroke-width="1"/><rect x="4.5" y="4.2" width="1" height="3.2" fill="#3794ff"/><rect x="4.5" y="2.5" width="1" height="1" fill="#3794ff"/></svg>
<div class="t" style="left:373.60px;top:426.20px;font-size:8.40px;font-weight:normal;color:#ececec;letter-spacing:-0.261px">Do you want to install the recommended &#x27;Makefile Tools&#x27;</div>
<div class="t" style="left:373.60px;top:438.40px;font-size:8.40px;font-weight:normal;color:#ececec;letter-spacing:-0.235px">extension from Microsoft for the Makefile language?</div>
<svg class="a" style="left:584.5px;top:425.3px" width="10" height="10" viewBox="0 0 10 10"><circle cx="5" cy="5" r="3.3" fill="none" stroke="#ddd" stroke-width="1.3" stroke-dasharray="1.3 1"/><circle cx="5" cy="5" r="2.6" fill="none" stroke="#ddd" stroke-width="0.9"/><circle cx="5" cy="5" r="1" fill="none" stroke="#ddd" stroke-width="0.8"/></svg>
<svg class="a" style="left:601px;top:427px" width="7" height="7" viewBox="0 0 7 7"><path d="M1 1 L6 6 M6 1 L1 6" stroke="#eee" stroke-width="1" fill="none"/></svg>
<div class="a" style="left:482.5px;top:455px;width:32.5px;height:17px;border:1px solid #3f7486;border-radius:2px"></div>
<div class="t" style="left:488.40px;top:460.20px;font-size:8.00px;font-weight:normal;color:#ececec;letter-spacing:-0.087px">Install</div>
<div class="a" style="left:520px;top:455px;width:90px;height:17px;border:1px solid #3f7486;border-radius:2px"></div>
<div class="t" style="left:526.60px;top:460.40px;font-size:7.50px;font-weight:normal;color:#ececec;letter-spacing:-0.280px">Show Recommendations</div>
</body></html>
